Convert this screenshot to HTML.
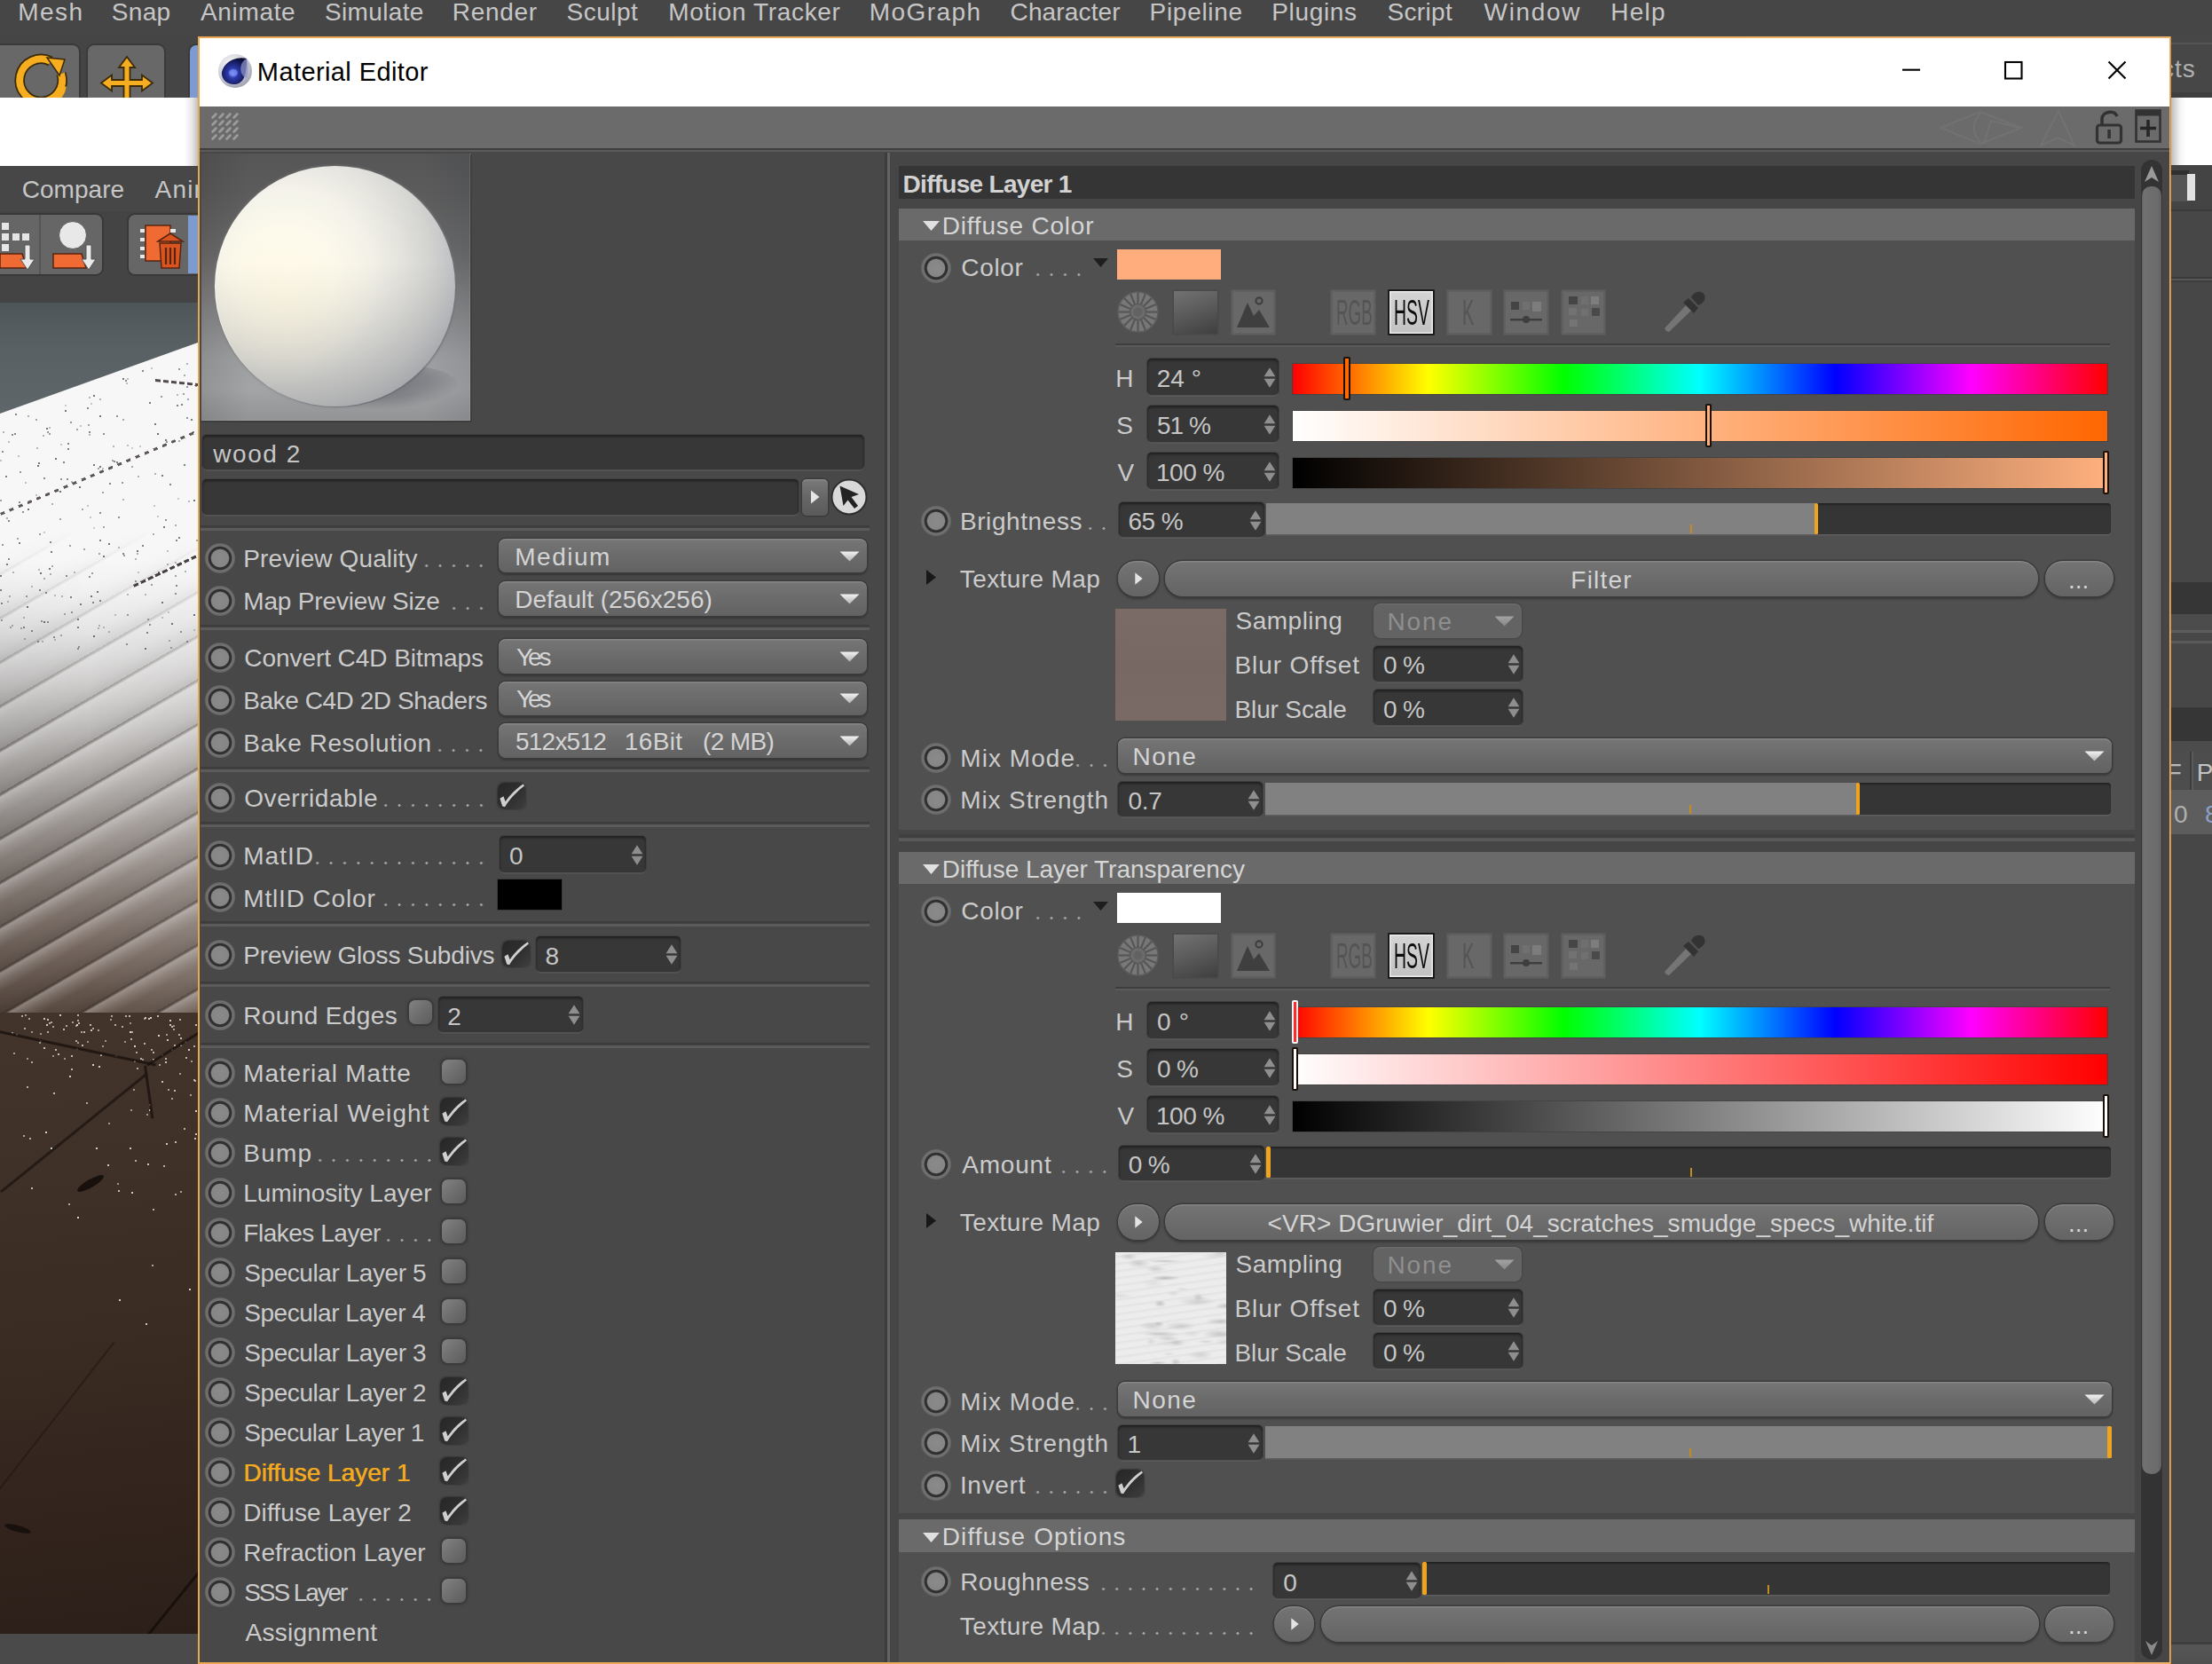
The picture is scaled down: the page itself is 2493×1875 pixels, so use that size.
<!DOCTYPE html>
<html><head><meta charset="utf-8"><title>Material Editor</title>
<style>
html,body{margin:0;padding:0;}
body{width:2493px;height:1875px;overflow:hidden;position:relative;background:#454545;
 font-family:"Liberation Sans",sans-serif;}
div{position:absolute;box-sizing:border-box;}
svg{position:absolute;overflow:visible;}
.t{white-space:nowrap;}
/* animation dot (radio-like circle) */
.dot{width:36px;height:36px;border-radius:50%;
 background:radial-gradient(circle at 50% 50%,#8a8a8a 0,#868686 9.6px,#303030 10.8px,#303030 12.8px,#717171 13.8px,#6c6c6c 16.2px,rgba(105,105,105,0) 17.4px);}
/* dropdown */
.dd{border-radius:8px;background:linear-gradient(#767676,#6c6c6c 45%,#626262);
 box-shadow:0 0 0 1.5px #3b3b3b,0 2px 2px 1px rgba(0,0,0,.25), inset 0 1.5px 0 rgba(255,255,255,.12);}
.dd.dis{background:#636363;box-shadow:0 0 0 1.5px #484848, inset 0 1.5px 0 rgba(255,255,255,.06);}
/* numeric / text field */
.fld{border-radius:5px;background:#373737;
 box-shadow:inset 0 2px 3px rgba(0,0,0,.45),0 1.5px 0 rgba(255,255,255,.10),0 0 0 1px #3f3f3f;}
/* pill button */
.pill{border-radius:22px;background:linear-gradient(#747474,#6c6c6c 50%,#646464);
 box-shadow:0 0 0 1.5px #3a3a3a,0 2px 3px 1px rgba(0,0,0,.3), inset 0 1.5px 0 rgba(255,255,255,.13);}
/* checkboxes */
.cb{border-radius:7px;background:linear-gradient(135deg,#838383,#707070 45%,#5c5c5c);
 box-shadow:0 0 0 2px #3b3b3b,0 0 2px 2.5px rgba(60,60,60,.5);}
.cbk{border-radius:8px;background:linear-gradient(135deg,#262626,#303030 55%,#3e3e3e);
 box-shadow:0 0 1.5px 0.5px rgba(50,50,50,.8),0 1.5px 0 rgba(255,255,255,.08);}
.sep{height:4px;background:linear-gradient(#3d3d3d 0,#3d3d3d 50%,#5a5a5a 50%,#5a5a5a 100%);}
.ibtn{background:#686868;box-shadow:0 0 0 1.5px #5f5f5f, inset 0 0 0 1px #606060;}

</style></head>
<body>
<div style="left:0px;top:0px;width:2493px;height:42px;background:#464646;"></div>
<div class="t" style="left:20.35px;top:0.4px;font-size:28px;line-height:28px;color:#c6c6c6;letter-spacing:1.38px;">Mesh</div>
<div class="t" style="left:125.75px;top:0.4px;font-size:28px;line-height:28px;color:#c6c6c6;letter-spacing:0.33px;">Snap</div>
<div class="t" style="left:226px;top:0.4px;font-size:28px;line-height:28px;color:#c6c6c6;letter-spacing:0.66px;">Animate</div>
<div class="t" style="left:366.05px;top:0.4px;font-size:28px;line-height:28px;color:#c6c6c6;letter-spacing:0.34px;">Simulate</div>
<div class="t" style="left:509.75px;top:0.4px;font-size:28px;line-height:28px;color:#c6c6c6;letter-spacing:0.69px;">Render</div>
<div class="t" style="left:638.45px;top:0.4px;font-size:28px;line-height:28px;color:#c6c6c6;letter-spacing:0.52px;">Sculpt</div>
<div class="t" style="left:753.25px;top:0.4px;font-size:28px;line-height:28px;color:#c6c6c6;letter-spacing:0.65px;">Motion Tracker</div>
<div class="t" style="left:979.75px;top:0.4px;font-size:28px;line-height:28px;color:#c6c6c6;letter-spacing:1.43px;">MoGraph</div>
<div class="t" style="left:1138.55px;top:0.4px;font-size:28px;line-height:28px;color:#c6c6c6;letter-spacing:0.14px;">Character</div>
<div class="t" style="left:1295.55px;top:0.4px;font-size:28px;line-height:28px;color:#c6c6c6;letter-spacing:0.71px;">Pipeline</div>
<div class="t" style="left:1433.15px;top:0.4px;font-size:28px;line-height:28px;color:#c6c6c6;letter-spacing:0.68px;">Plugins</div>
<div class="t" style="left:1563.45px;top:0.4px;font-size:28px;line-height:28px;color:#c6c6c6;letter-spacing:0.33px;">Script</div>
<div class="t" style="left:1672.6px;top:0.4px;font-size:28px;line-height:28px;color:#c6c6c6;letter-spacing:1.68px;">Window</div>
<div class="t" style="left:1815.25px;top:0.4px;font-size:28px;line-height:28px;color:#c6c6c6;letter-spacing:1.22px;">Help</div>
<div style="left:0px;top:42px;width:223px;height:68px;background:#454545;"></div>
<div style="left:-6px;top:51px;width:95px;height:70px;background:#686868;border-radius:7px;box-shadow:0 0 0 2px #3a3a3a;"></div>
<div style="left:99px;top:51px;width:86px;height:70px;background:#686868;border-radius:7px;box-shadow:0 0 0 2px #3a3a3a;"></div>
<div style="left:213.5px;top:51px;width:20px;height:70px;background:#7d9bd0;border-radius:7px 0 0 0;box-shadow:0 0 0 2px #3a3a3a;"></div>
<svg style="left:17px;top:61px" width="62" height="62" viewBox="0 0 62 62"><path d="M40 8 A24 24 0 1 0 52 22" fill="none" stroke="#3a2a08" stroke-width="11.5"/><path d="M40 8 A24 24 0 1 0 52 22" fill="none" stroke="#f6ad1f" stroke-width="8"/><path d="M36 4 L56 6 L50 24 Z" fill="#f6ad1f" stroke="#3a2a08" stroke-width="1.5"/><path d="M22 54 A24 24 0 0 0 54 36" fill="none" stroke="#f6ad1f" stroke-width="8"/></svg>
<svg style="left:112px;top:62px" width="62" height="62" viewBox="0 0 62 62"><path d="M31 2 L40 14 L34.5 14 L34.5 28 L48 28 L48 22.5 L60 31.5 L48 40.5 L48 35 L34.5 35 L34.5 60 L27.5 60 L27.5 35 L14 35 L14 40.5 L2 31.5 L14 22.5 L14 28 L27.5 28 L27.5 14 L22 14 Z" fill="#f6ad1f" stroke="#3a2a08" stroke-width="1.8"/></svg>
<div style="left:0px;top:110px;width:223px;height:77px;background:#ffffff;"></div>
<div style="left:0px;top:187px;width:223px;height:52px;background:#474747;"></div>
<div class="t" style="left:24.75px;top:199.8px;font-size:28px;line-height:28px;color:#c6c6c6;letter-spacing:0.04px;">Compare</div>
<div class="t" style="left:174.5px;top:199.8px;font-size:28px;line-height:28px;color:#c6c6c6;letter-spacing:1.2px;">Anim</div>
<div style="left:0px;top:239px;width:223px;height:102px;background:#444444;"></div>
<div style="left:-6px;top:242px;width:121px;height:67px;background:#666666;border-radius:7px;box-shadow:0 0 0 2px #383838;"></div>
<div style="left:44px;top:242px;width:2px;height:67px;background:#555;"></div>
<div style="left:145px;top:242px;width:90px;height:67px;background:#666666;border-radius:7px;box-shadow:0 0 0 2px #383838;"></div>
<div style="left:212px;top:243px;width:12px;height:65px;background:#7d9bd0;"></div>
<svg style="left:0px;top:248px" width="44" height="60" viewBox="0 0 44 60"><g fill="#e6e6e6"><rect x="2" y="3" width="8" height="8"/><rect x="2" y="15" width="8" height="8"/><rect x="14" y="15" width="8" height="8"/><rect x="25" y="15" width="8" height="8"/><rect x="2" y="27" width="8" height="8"/></g><path d="M0 38 L25 38 L30 54 L0 54 Z" fill="#ef6b33" stroke="#5a2410" stroke-width="1.5"/><path d="M28 28 L34 28 L34 44 L39 44 L31 56 L23 44 L28 44 Z" fill="#e9e9e9" stroke="#555" stroke-width="1"/></svg>
<svg style="left:56px;top:248px" width="56" height="60" viewBox="0 0 56 60"><circle cx="26" cy="17" r="15.5" fill="#e8e8e8" stroke="#5a5a5a" stroke-width="1"/><path d="M4 38 L36 38 L41 54 L4 54 Z" fill="#ef6b33" stroke="#5a2410" stroke-width="1.5"/><path d="M41 28 L47 28 L47 44 L52 44 L44 56 L36 44 L41 44 Z" fill="#e9e9e9" stroke="#555" stroke-width="1"/></svg>
<svg style="left:156px;top:250px" width="56" height="58" viewBox="0 0 56 58"><path d="M8 4 L36 4 L36 44 L8 44 Z" fill="#ef6b33" stroke="#5a2410" stroke-width="1.5"/><g fill="#e8e8e8"><rect x="2" y="8" width="5" height="4"/><rect x="2" y="18" width="5" height="4"/><rect x="2" y="28" width="5" height="4"/><rect x="2" y="37" width="5" height="4"/><rect x="36" y="8" width="6" height="4"/></g><path d="M24 24 L48 24 L46 52 L26 52 Z" fill="#d9551f" stroke="#5a2410" stroke-width="1.5"/><path d="M22 22 L36 13 L50 22 Z" fill="#d9551f" stroke="#5a2410" stroke-width="1.5"/><g stroke="#5a2410" stroke-width="2.2"><line x1="31" y1="29" x2="31" y2="48"/><line x1="36" y1="29" x2="36" y2="48"/><line x1="41" y1="29" x2="41" y2="48"/></g></svg>
<div style="left:0px;top:341px;width:223px;height:1499.6px;background:linear-gradient(#4f5659 0,#596064 50px,#60686c 140px);overflow:hidden;"><div style="left:0;top:0;width:223px;height:1506px;clip-path:polygon(0 125px,223px 45px,223px 1506px,0 1506px);background:linear-gradient(#f7f7f7 0,#f7f7f7 290px,#f0f0f0 330px,#e6e6e6 365px,#c8c6c5 459px,#a8a3a0 559px,#8a7f79 659px,#6e5f56 759px,#5e4e44 800px);"></div><div style="left:0;top:290px;width:223px;height:510px;-webkit-mask-image:linear-gradient(rgba(0,0,0,0) 0,#000 160px);mask-image:linear-gradient(rgba(0,0,0,0) 0,#000 160px);background:linear-gradient(90deg,rgba(0,0,0,.10) 0,rgba(0,0,0,0) 45%,rgba(255,255,255,.14) 100%);"></div><div style="left:0;top:255px;width:223px;height:545px;-webkit-mask-image:linear-gradient(rgba(0,0,0,0) 0,rgba(0,0,0,.5) 120px,#000 260px);mask-image:linear-gradient(rgba(0,0,0,0) 0,rgba(0,0,0,.5) 120px,#000 260px);background:repeating-linear-gradient(150deg,rgba(35,25,20,.42) 0,rgba(35,25,20,.25) 2px,rgba(255,255,255,.30) 4px,rgba(255,255,255,.14) 12px,rgba(255,255,255,0) 22px,rgba(0,0,0,.04) 32px,rgba(0,0,0,.12) 43px);"></div><div style="left:0;top:0;width:2px;height:2px;box-shadow:198px 267px 0 0 rgba(60,66,80,0.62),181px 105px 0 0 rgba(60,66,80,0.51),112px 335px 0 0 rgba(60,66,80,0.65),184px 252px 0 0 rgba(60,66,80,0.70),152px 288px 0 0 rgba(60,66,80,0.36),186px 244px 0 0 rgba(60,66,80,0.56),139px 284px 0 0 rgba(60,66,80,0.49),0px 323px 0 0 rgba(60,66,80,0.62),112px 236px 0 0 rgba(60,66,80,0.58),14px 303px 0 0 rgba(60,66,80,0.38),16px 147px 0 0 rgba(60,66,80,0.61),45px 304px 0 0 rgba(60,66,80,0.74),110px 186px 0 0 rgba(60,66,80,0.49),152px 313px 0 0 rgba(60,66,80,0.56),143px 85px 0 0 rgba(60,66,80,0.32),56px 305px 0 0 rgba(60,66,80,0.40),13px 148px 0 0 rgba(60,66,80,0.59),154px 282px 0 0 rgba(60,66,80,0.40),115px 213px 0 0 rgba(60,66,80,0.48),26px 354px 0 0 rgba(60,66,80,0.35),218px 368px 0 0 rgba(60,66,80,0.26),102px 330px 0 0 rgba(60,66,80,0.73),100px 148px 0 0 rgba(60,66,80,0.35),210px 129px 0 0 rgba(60,66,80,0.54),31px 232px 0 0 rgba(60,66,80,0.73),29px 330px 0 0 rgba(60,66,80,0.50),197px 292px 0 0 rgba(60,66,80,0.37),200px 220px 0 0 rgba(60,66,80,0.26),0px 222px 0 0 rgba(60,66,80,0.48),76px 164px 0 0 rgba(60,66,80,0.67),0px 307px 0 0 rgba(60,66,80,0.67),26px 365px 0 0 rgba(60,66,80,0.61),201px 155px 0 0 rgba(60,66,80,0.44),87px 389px 0 0 rgba(60,66,80,0.54),80px 201px 0 0 rgba(60,66,80,0.39),186px 154px 0 0 rgba(60,66,80,0.72),55px 147px 0 0 rgba(60,66,80,0.51),42px 183px 0 0 rgba(60,66,80,0.73),197px 327px 0 0 rgba(60,66,80,0.57),203px 370px 0 0 rgba(60,66,80,0.52),160px 76px 0 0 rgba(60,66,80,0.62),100px 308px 0 0 rgba(60,66,80,0.57),206px 102px 0 0 rgba(60,66,80,0.49),76px 158px 0 0 rgba(60,66,80,0.62),217px 145px 0 0 rgba(60,66,80,0.58),67px 243px 0 0 rgba(60,66,80,0.45),46px 358px 0 0 rgba(60,66,80,0.50),49px 359px 0 0 rgba(60,66,80,0.75),100px 106px 0 0 rgba(60,66,80,0.35),20px 172px 0 0 rgba(60,66,80,0.30),53px 145px 0 0 rgba(60,66,80,0.53),197px 307px 0 0 rgba(60,66,80,0.46),92px 232px 0 0 rgba(60,66,80,0.44),61px 379px 0 0 rgba(60,66,80,0.31),112px 267px 0 0 rgba(60,66,80,0.68),48px 149px 0 0 rgba(60,66,80,0.37),89px 207px 0 0 rgba(60,66,80,0.73),189px 348px 0 0 rgba(60,66,80,0.26),7px 294px 0 0 rgba(60,66,80,0.70),105px 253px 0 0 rgba(60,66,80,0.25),87px 365px 0 0 rgba(60,66,80,0.66),190px 380px 0 0 rgba(60,66,80,0.37),116px 285px 0 0 rgba(60,66,80,0.72),160px 273px 0 0 rgba(60,66,80,0.63),101px 241px 0 0 rgba(60,66,80,0.27),174px 136px 0 0 rgba(60,66,80,0.71),143px 160px 0 0 rgba(60,66,80,0.31),56px 269px 0 0 rgba(60,66,80,0.60),116px 252px 0 0 rgba(60,66,80,0.44),49px 258px 0 0 rgba(60,66,80,0.26),67px 212px 0 0 rgba(60,66,80,0.73),143px 351px 0 0 rgba(60,66,80,0.49),52px 141px 0 0 rgba(60,66,80,0.73),157px 161px 0 0 rgba(60,66,80,0.26),111px 282px 0 0 rgba(60,66,80,0.46),57px 280px 0 0 rgba(60,66,80,0.71),75px 198px 0 0 rgba(60,66,80,0.59),44px 323px 0 0 rgba(60,66,80,0.62),112px 127px 0 0 rgba(60,66,80,0.73),69px 330px 0 0 rgba(60,66,80,0.37),49px 310px 0 0 rgba(60,66,80,0.40),212px 223px 0 0 rgba(60,66,80,0.34),49px 197px 0 0 rgba(60,66,80,0.58),211px 108px 0 0 rgba(60,66,80,0.45),47px 381px 0 0 rgba(60,66,80,0.32),87px 356px 0 0 rgba(60,66,80,0.69),163px 389px 0 0 rgba(60,66,80,0.72),73px 121px 0 0 rgba(60,66,80,0.72),148px 184px 0 0 rgba(60,66,80,0.44),73px 115px 0 0 rgba(60,66,80,0.25),62px 175px 0 0 rgba(60,66,80,0.73),27px 378px 0 0 rgba(60,66,80,0.35),79px 331px 0 0 rgba(60,66,80,0.66),105px 182px 0 0 rgba(60,66,80,0.71),43px 180px 0 0 rgba(60,66,80,0.70),6px 195px 0 0 rgba(60,66,80,0.66),170px 73px 0 0 rgba(60,66,80,0.27),13px 363px 0 0 rgba(60,66,80,0.38),166px 356px 0 0 rgba(60,66,80,0.42),60px 376px 0 0 rgba(60,66,80,0.56),58px 296px 0 0 rgba(60,66,80,0.41),168px 362px 0 0 rgba(60,66,80,0.57),210px 68px 0 0 rgba(60,66,80,0.37),105px 375px 0 0 rgba(60,66,80,0.73),86px 142px 0 0 rgba(60,66,80,0.46),110px 366px 0 0 rgba(60,66,80,0.34),178px 303px 0 0 rgba(60,66,80,0.66),172px 260px 0 0 rgba(60,66,80,0.41),71px 179px 0 0 rgba(60,66,80,0.64),17px 125px 0 0 rgba(60,66,80,0.63),7px 242px 0 0 rgba(60,66,80,0.41),218px 351px 0 0 rgba(60,66,80,0.74),21px 224px 0 0 rgba(60,66,80,0.60),99px 137px 0 0 rgba(60,66,80,0.46),138px 282px 0 0 rgba(60,66,80,0.62),188px 279px 0 0 rgba(60,66,80,0.31),187px 156px 0 0 rgba(60,66,80,0.53),83px 303px 0 0 rgba(60,66,80,0.35),55px 140px 0 0 rgba(60,66,80,0.33),197px 250px 0 0 rgba(60,66,80,0.41),88px 387px 0 0 rgba(60,66,80,0.50),51px 326px 0 0 rgba(60,66,80,0.58),220px 93px 0 0 rgba(60,66,80,0.49),182px 337px 0 0 rgba(60,66,80,0.71),9px 156px 0 0 rgba(60,66,80,0.31),42px 381px 0 0 rgba(60,66,80,0.54),207px 182px 0 0 rgba(60,66,80,0.68),100px 145px 0 0 rgba(60,66,80,0.64),210px 94px 0 0 rgba(60,66,80,0.55),138px 131px 0 0 rgba(60,66,80,0.43),31px 127px 0 0 rgba(60,66,80,0.38),133px 275px 0 0 rgba(60,66,80,0.35),2px 167px 0 0 rgba(60,66,80,0.59),41px 163px 0 0 rgba(60,66,80,0.35),177px 240px 0 0 rgba(60,66,80,0.28),22px 190px 0 0 rgba(60,66,80,0.53),142px 90px 0 0 rgba(60,66,80,0.33),155px 195px 0 0 rgba(60,66,80,0.39),68px 374px 0 0 rgba(60,66,80,0.41),126px 177px 0 0 rgba(60,66,80,0.46),192px 388px 0 0 rgba(60,66,80,0.43),43px 300px 0 0 rgba(60,66,80,0.35),1px 357px 0 0 rgba(60,66,80,0.46),182px 194px 0 0 rgba(60,66,80,0.69),102px 113px 0 0 rgba(60,66,80,0.26),122px 271px 0 0 rgba(60,66,80,0.70),19px 265px 0 0 rgba(60,66,80,0.44),112px 108px 0 0 rgba(60,66,80,0.39),116px 365px 0 0 rgba(60,66,80,0.30),109px 325px 0 0 rgba(60,66,80,0.73),210px 381px 0 0 rgba(60,66,80,0.49),11px 365px 0 0 rgba(60,66,80,0.44),201px 264px 0 0 rgba(60,66,80,0.66),35px 319px 0 0 rgba(60,66,80,0.36),90px 339px 0 0 rgba(60,66,80,0.66),40px 131px 0 0 rgba(60,66,80,0.45),115px 186px 0 0 rgba(60,66,80,0.31),55px 299px 0 0 rgba(60,66,80,0.70),9px 245px 0 0 rgba(60,66,80,0.63),8px 336px 0 0 rgba(60,66,80,0.31),133px 241px 0 0 rgba(60,66,80,0.56),68px 198px 0 0 rgba(60,66,80,0.54),94px 277px 0 0 rgba(60,66,80,0.47),138px 221px 0 0 rgba(60,66,80,0.37),170px 317px 0 0 rgba(60,66,80,0.48),40px 216px 0 0 rgba(60,66,80,0.30),28px 202px 0 0 rgba(60,66,80,0.30),98px 228px 0 0 rgba(60,66,80,0.27),141px 87px 0 0 rgba(60,66,80,0.62),173px 228px 0 0 rgba(60,66,80,0.28),112px 184px 0 0 rgba(60,66,80,0.73),30px 342px 0 0 rgba(60,66,80,0.75),163px 328px 0 0 rgba(60,66,80,0.35),218px 222px 0 0 rgba(60,66,80,0.73),204px 114px 0 0 rgba(60,66,80,0.64),207px 81px 0 0 rgba(60,66,80,0.43),168px 112px 0 0 rgba(60,66,80,0.70),61px 329px 0 0 rgba(60,66,80,0.32),111px 363px 0 0 rgba(60,66,80,0.35),58px 226px 0 0 rgba(60,66,80,0.41),35px 369px 0 0 rgba(60,66,80,0.59),199px 115px 0 0 rgba(60,66,80,0.64),25px 235px 0 0 rgba(60,66,80,0.57),80px 348px 0 0 rgba(60,66,80,0.53),129px 351px 0 0 rgba(60,66,80,0.30),221px 267px 0 0 rgba(60,66,80,0.45),177px 147px 0 0 rgba(60,66,80,0.75),128px 178px 0 0 rgba(60,66,80,0.63),98px 118px 0 0 rgba(60,66,80,0.62),10px 330px 0 0 rgba(60,66,80,0.38),142px 384px 0 0 rgba(60,66,80,0.54),148px 163px 0 0 rgba(60,66,80,0.25),137px 202px 0 0 rgba(60,66,80,0.51),199px 103px 0 0 rgba(60,66,80,0.36),0px 177px 0 0 rgba(60,66,80,0.30),79px 134px 0 0 rgba(60,66,80,0.54),131px 127px 0 0 rgba(60,66,80,0.56),105px 104px 0 0 rgba(60,66,80,0.72),21px 270px 0 0 rgba(60,66,80,0.69),174px 192px 0 0 rgba(60,66,80,0.38),2px 272px 0 0 rgba(60,66,80,0.53),78px 273px 0 0 rgba(60,66,80,0.47),208px 302px 0 0 rgba(60,66,80,0.37),201px 74px 0 0 rgba(60,66,80,0.52),90px 138px 0 0 rgba(60,66,80,0.28),122px 370px 0 0 rgba(60,66,80,0.32),44px 260px 0 0 rgba(60,66,80,0.50),143px 328px 0 0 rgba(60,66,80,0.34),68px 159px 0 0 rgba(60,66,80,0.27),198px 318px 0 0 rgba(60,66,80,0.61),1px 338px 0 0 rgba(60,66,80,0.62),103px 304px 0 0 rgba(60,66,80,0.48),74px 307px 0 0 rgba(60,66,80,0.60),188px 294px 0 0 rgba(60,66,80,0.38),123px 203px 0 0 rgba(60,66,80,0.64),116px 147px 0 0 rgba(60,66,80,0.57),215px 131px 0 0 rgba(60,66,80,0.69),3px 145px 0 0 rgba(60,66,80,0.37),165px 371px 0 0 rgba(60,66,80,0.62),72px 350px 0 0 rgba(60,66,80,0.41),53px 359px 0 0 rgba(60,66,80,0.57),154px 279px 0 0 rgba(60,66,80,0.74),104px 337px 0 0 rgba(60,66,80,0.60),191px 204px 0 0 rgba(60,66,80,0.61),127px 161px 0 0 rgba(60,66,80,0.36),138px 85px 0 0 rgba(60,66,80,0.71),23px 366px 0 0 rgba(60,66,80,0.42),9px 288px 0 0 rgba(60,66,80,0.57),155px 303px 0 0 rgba(60,66,80,0.28),131px 179px 0 0 rgba(60,66,80,0.66),182px 354px 0 0 rgba(60,66,80,0.28),193px 361px 0 0 rgba(60,66,80,0.72);"></div><div style="left:0px;top:237px;width:245px;height:3px;transform:rotate(-22.8deg);transform-origin:0 0;background:repeating-linear-gradient(90deg,#2a2020 0,#2a2020 5px,rgba(0,0,0,0) 5px,rgba(0,0,0,0) 11px);opacity:.75;"></div><div style="left:150px;top:318px;width:90px;height:3px;transform:rotate(-25.4deg);transform-origin:0 0;background:repeating-linear-gradient(90deg,#2a2020 0,#2a2020 6px,rgba(0,0,0,0) 6px,rgba(0,0,0,0) 9px);opacity:.85;"></div><div style="left:175px;top:86px;width:50px;height:3px;transform:rotate(6deg);transform-origin:0 0;background:repeating-linear-gradient(90deg,#2a2020 0,#2a2020 6px,rgba(0,0,0,0) 6px,rgba(0,0,0,0) 9px);opacity:.8;"></div><div style="left:0;top:800px;width:223px;height:706px;overflow:hidden;background:linear-gradient(174deg,#43342b 0,#3f3028 25%,#382921 58%,#2c1f19 100%);"><div style="left:0;top:2px;width:2px;height:2px;box-shadow:101px 11px 0 0 rgba(225,220,215,0.81),35px 53px 0 0 rgba(225,220,215,0.70),30px 49px 0 0 rgba(225,220,215,0.56),124px 5px 0 0 rgba(225,220,215,0.59),122px 122px 0 0 rgba(225,220,215,0.60),78px 69px 0 0 rgba(225,220,215,0.93),151px 35px 0 0 rgba(225,220,215,0.94),26px 136px 0 0 rgba(225,220,215,0.67),57px 8px 0 0 rgba(225,220,215,0.67),193px 13px 0 0 rgba(225,220,215,0.78),162px 32px 0 0 rgba(225,220,215,0.77),32px 4px 0 0 rgba(225,220,215,0.63),170px 39px 0 0 rgba(225,220,215,0.68),153px 42px 0 0 rgba(225,220,215,0.67),189px 84px 0 0 rgba(225,220,215,0.65),151px 52px 0 0 rgba(225,220,215,0.90),178px 23px 0 0 rgba(225,220,215,0.94),49px 37px 0 0 rgba(225,220,215,0.85),59px 46px 0 0 rgba(225,220,215,0.57),168px 101px 0 0 rgba(225,220,215,0.78),203px 26px 0 0 rgba(225,220,215,0.83),154px 60px 0 0 rgba(225,220,215,0.73),197px 202px 0 0 rgba(225,220,215,0.74),167px 4px 0 0 rgba(225,220,215,0.83),164px 348px 0 0 rgba(225,220,215,0.88),92px 34px 0 0 rgba(225,220,215,0.82),15px 43px 0 0 rgba(225,220,215,0.62),49px 4px 0 0 rgba(225,220,215,0.86),53px 19px 0 0 rgba(225,220,215,0.71),202px 5px 0 0 rgba(225,220,215,0.73),146px 150px 0 0 rgba(225,220,215,0.88),201px 22px 0 0 rgba(225,220,215,0.72),108px 150px 0 0 rgba(225,220,215,0.93),59px 13px 0 0 rgba(225,220,215,0.64),80px 46px 0 0 rgba(225,220,215,0.79),87px 0px 0 0 rgba(225,220,215,0.72),111px 58px 0 0 rgba(225,220,215,0.93),172px 50px 0 0 rgba(225,220,215,0.80),169px 3px 0 0 rgba(225,220,215,0.91),187px 145px 0 0 rgba(225,220,215,0.87),115px 35px 0 0 rgba(225,220,215,0.59),162px 4px 0 0 rgba(225,220,215,0.58),74px 12px 0 0 rgba(225,220,215,0.69),28px 0px 0 0 rgba(225,220,215,0.61),44px 31px 0 0 rgba(225,220,215,0.56),202px 66px 0 0 rgba(225,220,215,0.61),85px 29px 0 0 rgba(225,220,215,0.70),51px 132px 0 0 rgba(225,220,215,0.95),130px 46px 0 0 rgba(225,220,215,0.58),45px 29px 0 0 rgba(225,220,215,0.66),195px 12px 0 0 rgba(225,220,215,0.56),215px 52px 0 0 rgba(225,220,215,0.61),145px 1px 0 0 rgba(225,220,215,0.76),219px 139px 0 0 rgba(225,220,215,0.83),87px 31px 0 0 rgba(225,220,215,0.62),186px 53px 0 0 rgba(225,220,215,0.86),102px 17px 0 0 rgba(225,220,215,0.87),220px 134px 0 0 rgba(225,220,215,0.87),193px 94px 0 0 rgba(225,220,215,0.64),140px 30px 0 0 rgba(225,220,215,0.56),18px 22px 0 0 rgba(225,220,215,0.65),172px 219px 0 0 rgba(225,220,215,0.73),213px 309px 0 0 rgba(225,220,215,0.93),110px 17px 0 0 rgba(225,220,215,0.64),71px 16px 0 0 rgba(225,220,215,0.80),207px 128px 0 0 rgba(225,220,215,0.74),165px 112px 0 0 rgba(225,220,215,0.58),166px 168px 0 0 rgba(225,220,215,0.86),182px 45px 0 0 rgba(225,220,215,0.62),188px 28px 0 0 rgba(225,220,215,0.87),218px 35px 0 0 rgba(225,220,215,0.71),214px 90px 0 0 rgba(225,220,215,0.62),52px 11px 0 0 rgba(225,220,215,0.91),191px 11px 0 0 rgba(225,220,215,0.88),219px 74px 0 0 rgba(225,220,215,0.69),146px 9px 0 0 rgba(225,220,215,0.56),218px 73px 0 0 rgba(225,220,215,0.76),212px 39px 0 0 rgba(225,220,215,0.90),195px 16px 0 0 rgba(225,220,215,0.65),94px 19px 0 0 rgba(225,220,215,0.78),86px 38px 0 0 rgba(225,220,215,0.60),208px 30px 0 0 rgba(225,220,215,0.73),152px 164px 0 0 rgba(225,220,215,0.72),209px 48px 0 0 rgba(225,220,215,0.76),141px 1px 0 0 rgba(225,220,215,0.73),67px 0px 0 0 rgba(225,220,215,0.87),65px 44px 0 0 rgba(225,220,215,0.84),147px 27px 0 0 rgba(225,220,215,0.76),147px 107px 0 0 rgba(225,220,215,0.59),148px 19px 0 0 rgba(225,220,215,0.66),186px 49px 0 0 rgba(225,220,215,0.77),184px 170px 0 0 rgba(225,220,215,0.73),158px 49px 0 0 rgba(225,220,215,0.75),172px 42px 0 0 rgba(225,220,215,0.76),133px 198px 0 0 rgba(225,220,215,0.83),203px 199px 0 0 rgba(225,220,215,0.65),148px 200px 0 0 rgba(225,220,215,0.89),55px 9px 0 0 rgba(225,220,215,0.73),35px 19px 0 0 rgba(225,220,215,0.58),168px 107px 0 0 rgba(225,220,215,0.91),60px 88px 0 0 rgba(225,220,215,0.81),57px 150px 0 0 rgba(225,220,215,0.94),77px 213px 0 0 rgba(225,220,215,0.71),134px 321px 0 0 rgba(225,220,215,0.88),62px 39px 0 0 rgba(225,220,215,0.76),104px 15px 0 0 rgba(225,220,215,0.68),177px 1px 0 0 rgba(225,220,215,0.77),125px 1px 0 0 rgba(225,220,215,0.68),160px 50px 0 0 rgba(225,220,215,0.58),220px 108px 0 0 rgba(225,220,215,0.94),45px 21px 0 0 rgba(225,220,215,0.57),187px 22px 0 0 rgba(225,220,215,0.60),121px 169px 0 0 rgba(225,220,215,0.88),86px 11px 0 0 rgba(225,220,215,0.92),150px 84px 0 0 rgba(225,220,215,0.59),30px 81px 0 0 rgba(225,220,215,0.72),35px 195px 0 0 rgba(225,220,215,0.80),191px 6px 0 0 rgba(225,220,215,0.89),33px 139px 0 0 rgba(225,220,215,0.73),104px 56px 0 0 rgba(225,220,215,0.92),88px 9px 0 0 rgba(225,220,215,0.76),81px 8px 0 0 rgba(225,220,215,0.61),27px 15px 0 0 rgba(225,220,215,0.67),97px 99px 0 0 rgba(225,220,215,0.67),137px 13px 0 0 rgba(225,220,215,0.69),13px 20px 0 0 rgba(225,220,215,0.56),179px 56px 0 0 rgba(225,220,215,0.63),132px 190px 0 0 rgba(225,220,215,0.59),193px 39px 0 0 rgba(225,220,215,0.75),196px 34px 0 0 rgba(225,220,215,0.75),171px 282px 0 0 rgba(225,220,215,0.69),196px 85px 0 0 rgba(225,220,215,0.80),118px 29px 0 0 rgba(225,220,215,0.57),53px 5px 0 0 rgba(225,220,215,0.85),85px 12px 0 0 rgba(225,220,215,0.58),197px 143px 0 0 rgba(225,220,215,0.82),91px 19px 0 0 rgba(225,220,215,0.67),129px 11px 0 0 rgba(225,220,215,0.73),87px 228px 0 0 rgba(225,220,215,0.94),146px 19px 0 0 rgba(225,220,215,0.94),98px 30px 0 0 rgba(225,220,215,0.55),113px 45px 0 0 rgba(225,220,215,0.75),72px 49px 0 0 rgba(225,220,215,0.55),87px 6px 0 0 rgba(225,220,215,0.71),24px 1px 0 0 rgba(225,220,215,0.67),80px 61px 0 0 rgba(225,220,215,0.76),182px 75px 0 0 rgba(225,220,215,0.84),203px 34px 0 0 rgba(225,220,215,0.68),220px 11px 0 0 rgba(225,220,215,0.84),163px 3px 0 0 rgba(225,220,215,0.88);"></div><div style="left:-10px;top:18px;width:190px;height:3px;background:#1a120e;transform:rotate(12deg);transform-origin:0 0;opacity:.8"></div><div style="left:165px;top:58px;width:70px;height:3px;background:#1a120e;transform:rotate(-32deg);transform-origin:0 0;opacity:.8"></div><div style="left:162px;top:60px;width:3px;height:60px;background:#1a120e;transform:rotate(-8deg);transform-origin:0 0;opacity:.8"></div><div style="left:0px;top:201px;width:210px;height:2.5px;background:#1c1410;transform:rotate(-39deg);transform-origin:0 0;opacity:.75"></div><div style="left:166px;top:700px;width:90px;height:2.5px;background:#150e0a;transform:rotate(-51deg);transform-origin:0 0;opacity:.85"></div><div style="left:-20px;top:560px;width:240px;height:2px;background:#1c1410;transform:rotate(-52deg);transform-origin:0 0;opacity:.5"></div><div style="left:85px;top:188px;width:34px;height:9px;background:#18100c;border-radius:50%;transform:rotate(-30deg);"></div><div style="left:5px;top:578px;width:30px;height:7px;background:#18100c;border-radius:50%;transform:rotate(15deg);"></div></div></div>
<div style="left:0px;top:1840.6px;width:223px;height:35px;background:#4a4a4a;"></div>
<div style="left:2447px;top:42px;width:46px;height:1833px;background:#474747;"></div>
<div style="left:2447px;top:48px;width:46px;height:2px;background:#555;"></div>
<div class="t" style="left:2436px;top:64px;font-size:28px;line-height:28px;color:#b0b0b0;letter-spacing:1px;">cts</div>
<div style="left:2447px;top:104px;width:46px;height:6px;background:#3e3e3e;"></div>
<div style="left:2447px;top:110px;width:46px;height:76px;background:linear-gradient(90deg,#bdbdbd 0,#f4f4f4 10px,#ffffff 16px);"></div>
<div style="left:2447px;top:186px;width:46px;height:52px;background:#444;"></div>
<div style="left:2447px;top:192px;width:20px;height:35px;background:linear-gradient(#2f2f2f 0,#2f2f2f 5px,#555 5px);"></div>
<div style="left:2465px;top:196px;width:9px;height:30px;background:#e2e2e2;"></div>
<div style="left:2447px;top:236px;width:46px;height:2px;background:#3a3a3a;"></div>
<div style="left:2447px;top:312px;width:46px;height:6px;background:linear-gradient(#3a3a3a 0,#3a3a3a 2px,#575757 2px,#575757 4px,#3e3e3e 4px);"></div>
<div style="left:2447px;top:656px;width:46px;height:36px;background:#363636;"></div>
<div style="left:2447px;top:692px;width:46px;height:18px;background:#4c4c4c;"></div>
<div style="left:2447px;top:710px;width:46px;height:3px;background:#5c5c5c;"></div>
<div style="left:2447px;top:722px;width:46px;height:3px;background:#5a5a5a;"></div>
<div style="left:2447px;top:797px;width:46px;height:38px;background:#363636;"></div>
<div style="left:2447px;top:835px;width:46px;height:12px;background:#4c4c4c;"></div>
<div style="left:2447px;top:847px;width:46px;height:43px;background:#4d4d4d;"></div>
<div style="left:2468px;top:847px;width:4px;height:43px;background:linear-gradient(90deg,#3c3c3c 0,#3c3c3c 50%,#5a5a5a 50%);"></div>
<div class="t" style="left:2441.75px;top:857px;font-size:28px;line-height:28px;color:#b8b8b8;">F</div>
<div class="t" style="left:2475.75px;top:857px;font-size:28px;line-height:28px;color:#c4c4c4;">P</div>
<div style="left:2447px;top:890px;width:46px;height:50px;background:#5d5d5d;"></div>
<div class="t" style="left:2450px;top:903.6px;font-size:28px;line-height:28px;color:#b0b0b0;">0</div>
<div class="t" style="left:2485px;top:903.6px;font-size:28px;line-height:28px;color:#8ca0c8;">8</div>
<div style="left:2447px;top:1850px;width:46px;height:25px;background:linear-gradient(#3e3e3e 0,#3e3e3e 3px,#565656 3px,#505050 100%);"></div>
<div style="left:222.8px;top:40.8px;width:2224.7px;height:1836px;background:linear-gradient(90deg,#e9a850 0,#ebb06a 2222.7px,#c98a3a 2223.6px,#7a4c14 2224.7px);"></div>
<div style="left:208px;top:110px;width:15px;height:77px;background:linear-gradient(90deg,rgba(255,255,255,0),rgba(150,150,150,.22) 55%,rgba(130,130,130,.5));"></div>
<div style="left:225.2px;top:43.1px;width:2219.6px;height:77.4px;background:#ffffff;"></div>
<div class="t" style="left:289.85px;top:67.3px;font-size:29px;line-height:29px;color:#000000;letter-spacing:0.4px;">Material Editor</div>
<svg style="left:245px;top:60px" width="40" height="40" viewBox="0 0 40 40"><defs><radialGradient id="lg1" cx="38%" cy="32%" r="80%"><stop offset="0" stop-color="#fbfbfc"/><stop offset=".5" stop-color="#d4d5dc"/><stop offset="1" stop-color="#8f91a3"/></radialGradient><radialGradient id="lg2" cx="45%" cy="58%" r="60%"><stop offset="0" stop-color="#6f86ee"/><stop offset=".35" stop-color="#2b38a8"/><stop offset="1" stop-color="#0a0c34"/></radialGradient></defs><circle cx="20" cy="20" r="19" fill="url(#lg1)"/><path d="M33 6 C22 3 8 9 5 21 C4 29 11 36 20 35 C29 34 33 26 33 6 Z" fill="url(#lg2)"/><path d="M33 6 C27 9 25 16 27 22 C28 25 30 27 33 28 C35 21 35 13 33 6 Z" fill="#8d93c9" opacity=".75"/><ellipse cx="18" cy="22" rx="5" ry="4" fill="#8aa0ff" opacity=".55"/></svg>
<svg style="left:2140px;top:60px" width="270" height="40" viewBox="0 0 270 40"><g stroke="#000" stroke-width="2.1" fill="none"><line x1="4" y1="18.7" x2="24" y2="18.7"/><rect x="120" y="10" width="18.5" height="18.5"/><line x1="236.5" y1="9.5" x2="255.5" y2="28.5"/><line x1="255.5" y1="9.5" x2="236.5" y2="28.5"/></g></svg>
<div style="left:225.2px;top:119.5px;width:2219.6px;height:47.5px;background:#6b6b6b;"></div>
<div style="left:225.2px;top:167px;width:2219.6px;height:5px;background:linear-gradient(#3e3e3e 0,#3e3e3e 45%,#5a5a5a 45%,#5a5a5a 70%,#484848 70%);"></div>
<svg style="left:237px;top:126px" width="34" height="34" viewBox="0 0 34 34"><g stroke="#9c9c9c" stroke-width="2.6" stroke-linecap="round"><line x1="2.5" y1="6.5" x2="6.5" y2="2.5"/><line x1="2.5" y1="14.5" x2="6.5" y2="10.5"/><line x1="2.5" y1="22.5" x2="6.5" y2="18.5"/><line x1="2.5" y1="30.5" x2="6.5" y2="26.5"/><line x1="10.5" y1="6.5" x2="14.5" y2="2.5"/><line x1="10.5" y1="14.5" x2="14.5" y2="10.5"/><line x1="10.5" y1="22.5" x2="14.5" y2="18.5"/><line x1="10.5" y1="30.5" x2="14.5" y2="26.5"/><line x1="18.5" y1="6.5" x2="22.5" y2="2.5"/><line x1="18.5" y1="14.5" x2="22.5" y2="10.5"/><line x1="18.5" y1="22.5" x2="22.5" y2="18.5"/><line x1="18.5" y1="30.5" x2="22.5" y2="26.5"/><line x1="26.5" y1="6.5" x2="30.5" y2="2.5"/><line x1="26.5" y1="14.5" x2="30.5" y2="10.5"/><line x1="26.5" y1="22.5" x2="30.5" y2="18.5"/><line x1="26.5" y1="30.5" x2="30.5" y2="26.5"/></g></svg>
<svg style="left:2184px;top:122px" width="160" height="46" viewBox="0 0 160 46" opacity=".5"><g fill="none" stroke="#7a7a7a" stroke-width="2"><path d="M3 22 L48 4 L94 22 L48 40 Z"/><path d="M48 6 C38 16 38 28 48 38"/><path d="M52 40 L60 14 L92 22"/><path d="M116 42 L136 3 L154 42 L135 33 Z"/></g></svg>
<svg style="left:2361px;top:122px" width="34" height="42" viewBox="0 0 34 42"><path d="M8 19 L8 12 C8 4 22 1 25 9" fill="none" stroke="#323232" stroke-width="3.6"/><rect x="2.5" y="19" width="27" height="20" rx="3" fill="#6b6b6b" stroke="#323232" stroke-width="3.2"/><rect x="14.3" y="24" width="3.6" height="10" fill="#323232"/></svg>
<svg style="left:2406px;top:123px" width="32" height="40" viewBox="0 0 32 40"><rect x="1.5" y="1.5" width="27" height="35" fill="#6b6b6b" stroke="#323232" stroke-width="2.6"/><rect x="1" y="1" width="28" height="6.5" fill="#323232"/><path d="M15 12 L15 31 M6 21.5 L24 21.5" stroke="#262626" stroke-width="3.6"/></svg>
<div style="left:225.2px;top:172px;width:772.8px;height:1700.9px;background:#484848;"></div>
<div style="left:997px;top:172px;width:7px;height:1700.5px;background:linear-gradient(90deg,#3d3d3d 0,#3b3b3b 2.8px,#626262 3.2px,#646464 5.6px,#454545 6px);"></div>
<div style="left:1004px;top:172px;width:1440.8px;height:1700.9px;background:#464646;"></div>
<div style="left:1012.5px;top:270px;width:1393.2px;height:664.5px;background:#505050;"></div>
<div style="left:1012.5px;top:996px;width:1393.2px;height:708.5px;background:#505050;"></div>
<div style="left:1012.5px;top:1748px;width:1393.2px;height:124.5px;background:#505050;"></div>
<div style="left:226.5px;top:173px;width:304px;height:301.5px;overflow:hidden;background:linear-gradient(#565656 0,#5c5c5c 15%,#6c6c6c 38%,#878788 58%,#9e9fa1 76%,#a3a4a6 88%,#929395 100%);box-shadow:inset -2px -2px 0 rgba(255,255,255,.12);"><div style="left:0;top:0;width:304px;height:302px;background:linear-gradient(90deg,rgba(0,0,0,.10) 0,rgba(0,0,0,0) 18%,rgba(0,0,0,0) 82%,rgba(20,30,50,.10) 100%);"></div><div style="left:120px;top:236px;width:170px;height:52px;border-radius:50%;background:radial-gradient(ellipse at 45% 40%,rgba(70,74,84,.6) 0,rgba(70,74,84,.32) 45%,rgba(70,74,84,0) 72%);"></div><div style="left:15.5px;top:14px;width:271px;height:271px;border-radius:50%;background:radial-gradient(circle at 30% 45%,#fffef6 0,#fdfbf0 22%,#f3f1e8 40%,#e3e2dc 55%,#d2d2cf 68%,#bcbec1 80%,#a3a9b2 92%,#929aa7 100%);box-shadow:0 0 3px 1px rgba(120,120,125,.6);"></div><div style="left:16px;top:14px;width:272px;height:272px;border-radius:50%;background:radial-gradient(circle at 28% 52%,rgba(255,240,200,.35) 0,rgba(255,240,200,0) 45%),linear-gradient(180deg,rgba(255,255,255,.12) 0,rgba(255,255,255,0) 40%,rgba(70,75,90,.28) 100%);"></div></div>
<div style="left:226px;top:474px;width:305px;height:2px;background:#3d3d3d;"></div>
<div style="left:529.5px;top:174px;width:2px;height:301px;background:#404040;"></div>
<div style="left:2413px;top:180px;width:24px;height:1690px;border-radius:12px;background:#333333;box-shadow:0 0 0 1.5px #474747;"></div>
<div style="left:2414px;top:210px;width:21.5px;height:1451px;border-radius:10px;background:linear-gradient(90deg,#626262 0,#727272 12%,#6e6e6e 30%,#6c6c6c 80%,#606060 100%);"></div>
<svg style="left:2414px;top:183px" width="22" height="26" viewBox="0 0 22 26"><path d="M11 4 L19 22 L11 17 L3 22 Z" fill="#9a9a9a"/></svg>
<svg style="left:2414px;top:1846px" width="22" height="22" viewBox="0 0 22 22"><path d="M11 19 L18 3 L11 8 L4 3 Z" fill="#8a8a8a"/></svg>
<div class="fld" style="left:228px;top:489.5px;width:746px;height:39.5px;"></div>
<div class="t" style="left:240.25px;top:498.05px;font-size:28px;line-height:28px;color:#c6c6c6;letter-spacing:1.55px;">wood 2</div>
<div class="fld" style="left:228px;top:540px;width:671.5px;height:39.5px;"></div>
<div style="left:903.5px;top:540px;width:29.5px;height:41px;border-radius:5px;background:linear-gradient(#7a7a7a,#666 50%,#5a5a5a);box-shadow:0 0 0 1.5px #3b3b3b, inset 0 1.5px 0 rgba(255,255,255,.12);"></div>
<svg style="left:913px;top:552px" width="11" height="16" viewBox="0 0 11 16"><path d="M1 0.5 L10.5 8 L1 15.5 Z" fill="#e6e6e6"/></svg>
<svg style="left:936px;top:538.5px" width="42" height="42" viewBox="0 0 42 42"><circle cx="21" cy="21" r="19.5" fill="#d9d9d9" stroke="#2e2e2e" stroke-width="2"/><path d="M10.5 8.5 L32 18 L23.5 21 L31 31 L27 34 L19.5 24.5 L14.5 31 Z" fill="#222"/></svg>
<div style="left:226px;top:591.5px;width:754px;height:6px;background:linear-gradient(#3d3d3d 0,#3b3b3b 40%,#595959 47%,#5d5d5d 90%,#525252 100%);"></div>
<div class="dot" style="left:229.5px;top:611px;width:36px;height:36px;"></div>
<div class="t" style="left:274.25px;top:616.1px;font-size:28px;line-height:28px;color:#cbcbcb;letter-spacing:0.12px;">Preview Quality</div>
<div style="left:473px;top:635.9px;width:77px;height:3.4px;background:radial-gradient(circle at 50% 50%,#a8a8a8 0,#a8a8a8 1.1px,rgba(168,168,168,0) 1.9px) 0 0/15.4px 3.4px repeat-x;"></div>
<div class="dot" style="left:229.5px;top:658.6px;width:36px;height:36px;"></div>
<div class="t" style="left:274.25px;top:663.7px;font-size:28px;line-height:28px;color:#cbcbcb;letter-spacing:-0.16px;">Map Preview Size</div>
<div style="left:503.8px;top:683.5px;width:46.2px;height:3.4px;background:radial-gradient(circle at 50% 50%,#a8a8a8 0,#a8a8a8 1.1px,rgba(168,168,168,0) 1.9px) 0 0/15.4px 3.4px repeat-x;"></div>
<div class="dot" style="left:229.5px;top:723.2px;width:36px;height:36px;"></div>
<div class="t" style="left:275.25px;top:728.3px;font-size:28px;line-height:28px;color:#cbcbcb;letter-spacing:-0.06px;">Convert C4D Bitmaps</div>
<div class="dot" style="left:229.5px;top:771px;width:36px;height:36px;"></div>
<div class="t" style="left:274.25px;top:776.1px;font-size:28px;line-height:28px;color:#cbcbcb;letter-spacing:-0.44px;">Bake C4D 2D Shaders</div>
<div class="dot" style="left:229.5px;top:818.7px;width:36px;height:36px;"></div>
<div class="t" style="left:274.25px;top:823.8px;font-size:28px;line-height:28px;color:#cbcbcb;letter-spacing:0.56px;">Bake Resolution</div>
<div style="left:488.4px;top:843.6px;width:61.6px;height:3.4px;background:radial-gradient(circle at 50% 50%,#a8a8a8 0,#a8a8a8 1.1px,rgba(168,168,168,0) 1.9px) 0 0/15.4px 3.4px repeat-x;"></div>
<div class="dot" style="left:229.5px;top:881px;width:36px;height:36px;"></div>
<div class="t" style="left:275.25px;top:886.1px;font-size:28px;line-height:28px;color:#cbcbcb;letter-spacing:0.55px;">Overridable</div>
<div style="left:426.8px;top:905.9px;width:123.2px;height:3.4px;background:radial-gradient(circle at 50% 50%,#a8a8a8 0,#a8a8a8 1.1px,rgba(168,168,168,0) 1.9px) 0 0/15.4px 3.4px repeat-x;"></div>
<div class="dot" style="left:229.5px;top:946.2px;width:36px;height:36px;"></div>
<div class="t" style="left:274.25px;top:951.3px;font-size:28px;line-height:28px;color:#cbcbcb;letter-spacing:1.04px;">MatID</div>
<div style="left:349.8px;top:971.1px;width:200.2px;height:3.4px;background:radial-gradient(circle at 50% 50%,#a8a8a8 0,#a8a8a8 1.1px,rgba(168,168,168,0) 1.9px) 0 0/15.4px 3.4px repeat-x;"></div>
<div class="dot" style="left:229.5px;top:993.4px;width:36px;height:36px;"></div>
<div class="t" style="left:274.25px;top:998.5px;font-size:28px;line-height:28px;color:#cbcbcb;letter-spacing:0.85px;">MtlID Color</div>
<div style="left:426.8px;top:1018.3px;width:123.2px;height:3.4px;background:radial-gradient(circle at 50% 50%,#a8a8a8 0,#a8a8a8 1.1px,rgba(168,168,168,0) 1.9px) 0 0/15.4px 3.4px repeat-x;"></div>
<div class="dot" style="left:229.5px;top:1058px;width:36px;height:36px;"></div>
<div class="t" style="left:274.25px;top:1063.1px;font-size:28px;line-height:28px;color:#cbcbcb;letter-spacing:-0.15px;">Preview Gloss Subdivs</div>
<div class="dot" style="left:229.5px;top:1125.8px;width:36px;height:36px;"></div>
<div class="t" style="left:274.25px;top:1130.9px;font-size:28px;line-height:28px;color:#cbcbcb;letter-spacing:0.38px;">Round Edges</div>
<div class="dd" style="left:562px;top:606.7px;width:415px;height:38.8px;"></div>
<div class="t" style="left:580.25px;top:613.6px;font-size:28px;line-height:28px;color:#d4d4d4;letter-spacing:1.5px;">Medium</div>
<svg style="left:946px;top:620.6px" width="23" height="12" viewBox="0 0 23 12" opacity="1"><defs><linearGradient id="ag" x1="0" y1="0" x2="0" y2="1"><stop offset="0" stop-color="#f2f2f2"/><stop offset="1" stop-color="#b4b4b4"/></linearGradient></defs><path d="M0.5 0.5 L22.5 0.5 L11.5 11.5 Z" fill="url(#ag)"/></svg>
<div class="dd" style="left:562px;top:655px;width:415px;height:38.5px;"></div>
<div class="t" style="left:580.25px;top:661.75px;font-size:28px;line-height:28px;color:#d4d4d4;letter-spacing:0px;">Default (256x256)</div>
<svg style="left:946px;top:668.75px" width="23" height="12" viewBox="0 0 23 12" opacity="1"><defs><linearGradient id="ag" x1="0" y1="0" x2="0" y2="1"><stop offset="0" stop-color="#f2f2f2"/><stop offset="1" stop-color="#b4b4b4"/></linearGradient></defs><path d="M0.5 0.5 L22.5 0.5 L11.5 11.5 Z" fill="url(#ag)"/></svg>
<div style="left:226px;top:704px;width:754px;height:6px;background:linear-gradient(#3d3d3d 0,#3b3b3b 40%,#595959 47%,#5d5d5d 90%,#525252 100%);"></div>
<div class="dd" style="left:562px;top:720px;width:415px;height:38.5px;"></div>
<div class="t" style="left:582px;top:726.75px;font-size:28px;line-height:28px;color:#d4d4d4;letter-spacing:-3.12px;">Yes</div>
<svg style="left:946px;top:733.75px" width="23" height="12" viewBox="0 0 23 12" opacity="1"><defs><linearGradient id="ag" x1="0" y1="0" x2="0" y2="1"><stop offset="0" stop-color="#f2f2f2"/><stop offset="1" stop-color="#b4b4b4"/></linearGradient></defs><path d="M0.5 0.5 L22.5 0.5 L11.5 11.5 Z" fill="url(#ag)"/></svg>
<div class="dd" style="left:562px;top:767.5px;width:415px;height:38.5px;"></div>
<div class="t" style="left:582px;top:774.25px;font-size:28px;line-height:28px;color:#d4d4d4;letter-spacing:-3.12px;">Yes</div>
<svg style="left:946px;top:781.25px" width="23" height="12" viewBox="0 0 23 12" opacity="1"><defs><linearGradient id="ag" x1="0" y1="0" x2="0" y2="1"><stop offset="0" stop-color="#f2f2f2"/><stop offset="1" stop-color="#b4b4b4"/></linearGradient></defs><path d="M0.5 0.5 L22.5 0.5 L11.5 11.5 Z" fill="url(#ag)"/></svg>
<div class="dd" style="left:562px;top:815px;width:415px;height:38.5px;"></div>
<div class="t" style="left:582.5px;top:821.75px;font-size:28px;line-height:28px;color:#d4d4d4;"></div>
<svg style="left:946px;top:828.75px" width="23" height="12" viewBox="0 0 23 12" opacity="1"><defs><linearGradient id="ag" x1="0" y1="0" x2="0" y2="1"><stop offset="0" stop-color="#f2f2f2"/><stop offset="1" stop-color="#b4b4b4"/></linearGradient></defs><path d="M0.5 0.5 L22.5 0.5 L11.5 11.5 Z" fill="url(#ag)"/></svg>
<div class="t" style="left:581px;top:821.8px;font-size:28px;line-height:28px;color:#d4d4d4;letter-spacing:-0.78px;">512x512</div>
<div class="t" style="left:703.8px;top:821.8px;font-size:28px;line-height:28px;color:#d4d4d4;letter-spacing:0.36px;">16Bit</div>
<div class="t" style="left:792.1px;top:821.8px;font-size:28px;line-height:28px;color:#d4d4d4;letter-spacing:-0.64px;">(2 MB)</div>
<div style="left:226px;top:864px;width:754px;height:6px;background:linear-gradient(#3d3d3d 0,#3b3b3b 40%,#595959 47%,#5d5d5d 90%,#525252 100%);"></div>
<div class="cbk" style="left:560.9px;top:881.6px;width:30.8px;height:30.8px;"></div>
<svg style="left:560.9px;top:881.6px" width="31" height="31" viewBox="0 0 30.8 30.8"><path d="M2.4 17.6 L6.4 15.2 L8.6 21.2 C13.5 14 20.5 6.8 28.4 1.6 L29.8 3.6 C21.5 10 13.5 18 8 27 L5.2 26.4 Z" fill="#cfcfcf"/></svg>
<div style="left:226px;top:926px;width:754px;height:6px;background:linear-gradient(#3d3d3d 0,#3b3b3b 40%,#595959 47%,#5d5d5d 90%,#525252 100%);"></div>
<div class="fld" style="left:563px;top:942px;width:164.5px;height:40.5px;"></div>
<div class="t" style="left:574px;top:951.05px;font-size:28px;line-height:28px;color:#c6c6c6;">0</div>
<svg style="left:710.5px;top:951.55px" width="14" height="23" viewBox="0 0 14 23"><path d="M7 0.3 L13.4 10.2 L0.6 10.2 Z M7 22.7 L13.4 12.8 L0.6 12.8 Z" fill="#8e8e8e"/></svg>
<div style="left:560.7px;top:990.5px;width:72.5px;height:34px;background:#000;box-shadow:0 0 0 1px #3a3a3a;"></div>
<div style="left:226px;top:1038.3px;width:754px;height:6px;background:linear-gradient(#3d3d3d 0,#3b3b3b 40%,#595959 47%,#5d5d5d 90%,#525252 100%);"></div>
<div class="cbk" style="left:566.4px;top:1059.6px;width:30.8px;height:30.8px;"></div>
<svg style="left:566.4px;top:1059.6px" width="31" height="31" viewBox="0 0 30.8 30.8"><path d="M2.4 17.6 L6.4 15.2 L8.6 21.2 C13.5 14 20.5 6.8 28.4 1.6 L29.8 3.6 C21.5 10 13.5 18 8 27 L5.2 26.4 Z" fill="#cfcfcf"/></svg>
<div class="fld" style="left:603.6px;top:1054.5px;width:163.5px;height:40.5px;"></div>
<div class="t" style="left:614.6px;top:1063.55px;font-size:28px;line-height:28px;color:#c6c6c6;">8</div>
<svg style="left:750.1px;top:1064.05px" width="14" height="23" viewBox="0 0 14 23"><path d="M7 0.3 L13.4 10.2 L0.6 10.2 Z M7 22.7 L13.4 12.8 L0.6 12.8 Z" fill="#8e8e8e"/></svg>
<div style="left:226px;top:1106px;width:754px;height:6px;background:linear-gradient(#3d3d3d 0,#3b3b3b 40%,#595959 47%,#5d5d5d 90%,#525252 100%);"></div>
<div class="cb" style="left:460.6px;top:1126.9px;width:26.8px;height:26.8px;"></div>
<div class="fld" style="left:493.5px;top:1122.5px;width:163.5px;height:40.5px;"></div>
<div class="t" style="left:504.25px;top:1131.55px;font-size:28px;line-height:28px;color:#c6c6c6;">2</div>
<svg style="left:640px;top:1132.05px" width="14" height="23" viewBox="0 0 14 23"><path d="M7 0.3 L13.4 10.2 L0.6 10.2 Z M7 22.7 L13.4 12.8 L0.6 12.8 Z" fill="#8e8e8e"/></svg>
<div style="left:226px;top:1174.7px;width:754px;height:6px;background:linear-gradient(#3d3d3d 0,#3b3b3b 40%,#595959 47%,#5d5d5d 90%,#525252 100%);"></div>
<div class="dot" style="left:229.5px;top:1190.9px;width:36px;height:36px;"></div>
<div class="t" style="left:274.25px;top:1196px;font-size:28px;line-height:28px;color:#cbcbcb;letter-spacing:0.86px;">Material Matte</div>
<div class="cb" style="left:497.9px;top:1193.9px;width:26.8px;height:26.8px;"></div>
<div class="dot" style="left:229.5px;top:1235.9px;width:36px;height:36px;"></div>
<div class="t" style="left:274.25px;top:1241px;font-size:28px;line-height:28px;color:#cbcbcb;letter-spacing:1.09px;">Material Weight</div>
<div class="cbk" style="left:495.9px;top:1236.9px;width:30.8px;height:30.8px;"></div>
<svg style="left:495.9px;top:1236.9px" width="31" height="31" viewBox="0 0 30.8 30.8"><path d="M2.4 17.6 L6.4 15.2 L8.6 21.2 C13.5 14 20.5 6.8 28.4 1.6 L29.8 3.6 C21.5 10 13.5 18 8 27 L5.2 26.4 Z" fill="#cfcfcf"/></svg>
<div class="dot" style="left:229.5px;top:1280.9px;width:36px;height:36px;"></div>
<div class="t" style="left:274.25px;top:1286px;font-size:28px;line-height:28px;color:#cbcbcb;letter-spacing:1.25px;">Bump</div>
<div style="left:352.6px;top:1305.8px;width:138.6px;height:3.4px;background:radial-gradient(circle at 50% 50%,#a8a8a8 0,#a8a8a8 1.1px,rgba(168,168,168,0) 1.9px) 0 0/15.4px 3.4px repeat-x;"></div>
<div class="cbk" style="left:495.9px;top:1281.9px;width:30.8px;height:30.8px;"></div>
<svg style="left:495.9px;top:1281.9px" width="31" height="31" viewBox="0 0 30.8 30.8"><path d="M2.4 17.6 L6.4 15.2 L8.6 21.2 C13.5 14 20.5 6.8 28.4 1.6 L29.8 3.6 C21.5 10 13.5 18 8 27 L5.2 26.4 Z" fill="#cfcfcf"/></svg>
<div class="dot" style="left:229.5px;top:1325.9px;width:36px;height:36px;"></div>
<div class="t" style="left:274.25px;top:1331px;font-size:28px;line-height:28px;color:#cbcbcb;letter-spacing:0.04px;">Luminosity Layer</div>
<div class="cb" style="left:497.9px;top:1328.9px;width:26.8px;height:26.8px;"></div>
<div class="dot" style="left:229.5px;top:1370.9px;width:36px;height:36px;"></div>
<div class="t" style="left:274.25px;top:1376px;font-size:28px;line-height:28px;color:#cbcbcb;letter-spacing:-0.47px;">Flakes Layer</div>
<div style="left:429.6px;top:1395.8px;width:61.6px;height:3.4px;background:radial-gradient(circle at 50% 50%,#a8a8a8 0,#a8a8a8 1.1px,rgba(168,168,168,0) 1.9px) 0 0/15.4px 3.4px repeat-x;"></div>
<div class="cb" style="left:497.9px;top:1373.9px;width:26.8px;height:26.8px;"></div>
<div class="dot" style="left:229.5px;top:1415.9px;width:36px;height:36px;"></div>
<div class="t" style="left:275.25px;top:1421px;font-size:28px;line-height:28px;color:#cbcbcb;letter-spacing:-0.43px;">Specular Layer 5</div>
<div class="cb" style="left:497.9px;top:1418.9px;width:26.8px;height:26.8px;"></div>
<div class="dot" style="left:229.5px;top:1460.9px;width:36px;height:36px;"></div>
<div class="t" style="left:275.25px;top:1466px;font-size:28px;line-height:28px;color:#cbcbcb;letter-spacing:-0.47px;">Specular Layer 4</div>
<div class="cb" style="left:497.9px;top:1463.9px;width:26.8px;height:26.8px;"></div>
<div class="dot" style="left:229.5px;top:1505.9px;width:36px;height:36px;"></div>
<div class="t" style="left:275.25px;top:1511px;font-size:28px;line-height:28px;color:#cbcbcb;letter-spacing:-0.43px;">Specular Layer 3</div>
<div class="cb" style="left:497.9px;top:1508.9px;width:26.8px;height:26.8px;"></div>
<div class="dot" style="left:229.5px;top:1550.9px;width:36px;height:36px;"></div>
<div class="t" style="left:275.25px;top:1556px;font-size:28px;line-height:28px;color:#cbcbcb;letter-spacing:-0.42px;">Specular Layer 2</div>
<div class="cbk" style="left:495.9px;top:1551.9px;width:30.8px;height:30.8px;"></div>
<svg style="left:495.9px;top:1551.9px" width="31" height="31" viewBox="0 0 30.8 30.8"><path d="M2.4 17.6 L6.4 15.2 L8.6 21.2 C13.5 14 20.5 6.8 28.4 1.6 L29.8 3.6 C21.5 10 13.5 18 8 27 L5.2 26.4 Z" fill="#cfcfcf"/></svg>
<div class="dot" style="left:229.5px;top:1595.9px;width:36px;height:36px;"></div>
<div class="t" style="left:275.25px;top:1601px;font-size:28px;line-height:28px;color:#cbcbcb;letter-spacing:-0.58px;">Specular Layer 1</div>
<div class="cbk" style="left:495.9px;top:1596.9px;width:30.8px;height:30.8px;"></div>
<svg style="left:495.9px;top:1596.9px" width="31" height="31" viewBox="0 0 30.8 30.8"><path d="M2.4 17.6 L6.4 15.2 L8.6 21.2 C13.5 14 20.5 6.8 28.4 1.6 L29.8 3.6 C21.5 10 13.5 18 8 27 L5.2 26.4 Z" fill="#cfcfcf"/></svg>
<div class="dot" style="left:229.5px;top:1640.9px;width:36px;height:36px;"></div>
<div class="t" style="left:274.25px;top:1646px;font-size:28px;line-height:28px;color:#f2a91f;letter-spacing:0.01px;text-shadow:0.6px 0 0 #f2a91f;">Diffuse Layer 1</div>
<div class="cbk" style="left:495.9px;top:1641.9px;width:30.8px;height:30.8px;"></div>
<svg style="left:495.9px;top:1641.9px" width="31" height="31" viewBox="0 0 30.8 30.8"><path d="M2.4 17.6 L6.4 15.2 L8.6 21.2 C13.5 14 20.5 6.8 28.4 1.6 L29.8 3.6 C21.5 10 13.5 18 8 27 L5.2 26.4 Z" fill="#cfcfcf"/></svg>
<div class="dot" style="left:229.5px;top:1685.9px;width:36px;height:36px;"></div>
<div class="t" style="left:274.25px;top:1691px;font-size:28px;line-height:28px;color:#cbcbcb;letter-spacing:0.12px;">Diffuse Layer 2</div>
<div class="cbk" style="left:495.9px;top:1686.9px;width:30.8px;height:30.8px;"></div>
<svg style="left:495.9px;top:1686.9px" width="31" height="31" viewBox="0 0 30.8 30.8"><path d="M2.4 17.6 L6.4 15.2 L8.6 21.2 C13.5 14 20.5 6.8 28.4 1.6 L29.8 3.6 C21.5 10 13.5 18 8 27 L5.2 26.4 Z" fill="#cfcfcf"/></svg>
<div class="dot" style="left:229.5px;top:1730.9px;width:36px;height:36px;"></div>
<div class="t" style="left:274.25px;top:1736px;font-size:28px;line-height:28px;color:#cbcbcb;">Refraction Layer</div>
<div class="cb" style="left:497.9px;top:1733.9px;width:26.8px;height:26.8px;"></div>
<div class="dot" style="left:229.5px;top:1775.9px;width:36px;height:36px;"></div>
<div class="t" style="left:275.25px;top:1781px;font-size:28px;line-height:28px;color:#cbcbcb;letter-spacing:-2.09px;">SSS Layer</div>
<div style="left:398.8px;top:1800.8px;width:92.4px;height:3.4px;background:radial-gradient(circle at 50% 50%,#a8a8a8 0,#a8a8a8 1.1px,rgba(168,168,168,0) 1.9px) 0 0/15.4px 3.4px repeat-x;"></div>
<div class="cb" style="left:497.9px;top:1778.9px;width:26.8px;height:26.8px;"></div>
<div class="t" style="left:276.5px;top:1826px;font-size:28px;line-height:28px;color:#cbcbcb;letter-spacing:0.26px;">Assignment</div>
<div style="left:1012.5px;top:187px;width:1393.1px;height:36.7px;background:#353535;"></div>
<div class="t" style="left:1017.55px;top:194px;font-size:28px;line-height:28px;color:#d2d2d2;font-weight:bold;letter-spacing:-0.71px;">Diffuse Layer 1</div>
<div style="left:1012.5px;top:234.6px;width:1393.1px;height:36.6px;background:#6a6a6a;"></div>
<svg style="left:1040px;top:249.1px" width="19" height="11" viewBox="0 0 19 11"><path d="M0 0 L19 0 L9.5 11 Z" fill="#e0e0e0"/></svg>
<div class="t" style="left:1061.75px;top:240.6px;font-size:28px;line-height:28px;color:#d6d6d6;letter-spacing:0.79px;">Diffuse Color</div>
<div class="dot" style="left:1036.6px;top:283.6px;width:36px;height:36px;"></div>
<div class="t" style="left:1083.35px;top:288.3px;font-size:28px;line-height:28px;color:#cbcbcb;letter-spacing:0.64px;">Color</div>
<div style="left:1161.8px;top:308.3px;width:61.6px;height:3.4px;background:radial-gradient(circle at 50% 50%,#a8a8a8 0,#a8a8a8 1.1px,rgba(168,168,168,0) 1.9px) 0 0/15.4px 3.4px repeat-x;"></div>
<svg style="left:1232px;top:291px" width="17" height="10" viewBox="0 0 17 10"><path d="M0 0 L17 0 L8.5 10 Z" fill="#1e1e1e"/></svg>
<div style="left:1259.4px;top:281px;width:116.6px;height:33.6px;background:#ffad7c;"></div>
<svg style="left:1259px;top:328px" width="47" height="47" viewBox="0 0 47 47"><circle cx="23.5" cy="23.5" r="22.5" fill="#787878" stroke="#5e5e5e" stroke-width="1.5"/><g stroke="#565656" stroke-width="2.2"><line x1="23.5" y1="23.5" x2="45.5" y2="23.5"/><line x1="23.5" y1="23.5" x2="43.8" y2="31.9"/><line x1="23.5" y1="23.5" x2="39.1" y2="39.1"/><line x1="23.5" y1="23.5" x2="31.9" y2="43.8"/><line x1="23.5" y1="23.5" x2="23.5" y2="45.5"/><line x1="23.5" y1="23.5" x2="15.1" y2="43.8"/><line x1="23.5" y1="23.5" x2="7.9" y2="39.1"/><line x1="23.5" y1="23.5" x2="3.2" y2="31.9"/><line x1="23.5" y1="23.5" x2="1.5" y2="23.5"/><line x1="23.5" y1="23.5" x2="3.2" y2="15.1"/><line x1="23.5" y1="23.5" x2="7.9" y2="7.9"/><line x1="23.5" y1="23.5" x2="15.1" y2="3.2"/><line x1="23.5" y1="23.5" x2="23.5" y2="1.5"/><line x1="23.5" y1="23.5" x2="31.9" y2="3.2"/><line x1="23.5" y1="23.5" x2="39.1" y2="7.9"/><line x1="23.5" y1="23.5" x2="43.8" y2="15.1"/></g><circle cx="23.5" cy="23.5" r="9" fill="#6c6c6c" stroke="#5a5a5a" stroke-width="1.5"/><circle cx="23.5" cy="23.5" r="5" fill="#626262"/></svg>
<div style="left:1323px;top:328px;width:49px;height:48px;background:linear-gradient(160deg,#727272 0,#5c5c5c 45%,#3f3f3f 100%);box-shadow:0 0 0 1.5px #494949;"></div>
<div class="ibtn" style="left:1389px;top:328px;width:47px;height:48px;"></div>
<svg style="left:1389px;top:328px" width="47" height="48" viewBox="0 0 47 48"><path d="M5 41 L17 13 L24 28 L30 21 L42 41 Z" fill="#3f3f3f"/><circle cx="30" cy="11" r="3.6" fill="none" stroke="#3f3f3f" stroke-width="2.2"/></svg>
<div class="ibtn" style="left:1501px;top:328px;width:47.5px;height:48px;"></div>
<div class="t" style="left:1505.5px;top:332px;font-size:40px;line-height:40px;color:#545454;transform:scaleX(.47);transform-origin:0 0;">RGB</div>
<div style="left:1565.5px;top:328px;width:49px;height:48px;background:linear-gradient(#d4d4d4,#c2c2c2);box-shadow:0 0 0 1.8px #141414, inset 0 0 0 1.5px #ececec;"></div>
<div class="t" style="left:1570.5px;top:332px;font-size:40px;line-height:40px;color:#0c0c0c;transform:scaleX(.485);transform-origin:0 0;">HSV</div>
<div class="ibtn" style="left:1632px;top:328px;width:47.5px;height:48px;"></div>
<div class="t" style="left:1648px;top:332px;font-size:40px;line-height:40px;color:#545454;transform:scaleX(.5);transform-origin:0 0;">K</div>
<div class="ibtn" style="left:1696px;top:328px;width:47.5px;height:48px;"></div>
<svg style="left:1696px;top:328px" width="48" height="48" viewBox="0 0 48 48"><rect x="7" y="12" width="9" height="9" fill="#444"/><rect x="20" y="12" width="8" height="9" fill="#707070"/><rect x="31" y="12" width="10" height="11" fill="#7c7c7c"/><rect x="6" y="31" width="36" height="2.4" fill="#3e3e3e"/><circle cx="24" cy="32" r="4" fill="#3e3e3e"/></svg>
<div class="ibtn" style="left:1760.7px;top:328px;width:47.5px;height:48px;"></div>
<svg style="left:1760.7px;top:328px" width="48" height="48" viewBox="0 0 48 48"><rect x="7" y="6" width="10" height="9" fill="#454545"/><rect x="21" y="6" width="8" height="9" fill="#6f6f6f"/><rect x="32" y="6" width="9" height="9" fill="#7d7d7d"/><rect x="33" y="19" width="9" height="9" fill="#4a4a4a"/><rect x="7" y="19" width="9" height="8" fill="#727272"/><rect x="21" y="20" width="8" height="8" fill="#707070"/><rect x="8" y="32" width="9" height="8" fill="#747474"/></svg>
<svg style="left:1873px;top:327px" width="50" height="50" viewBox="0 0 50 50"><path d="M5 46 L3 43 L28 16 L34 22 L8 47 Z" fill="#757575"/><path d="M24 14 L30 9 L41 20 L36 26 Z" fill="#333"/><path d="M33 8 C36 1 44 0 47 4 C51 9 47 15 41 17 Z" fill="#333"/></svg>
<div class="sep" style="left:1256.6px;top:387px;width:1121px;height:4px;"></div>
<div class="t" style="left:1257.25px;top:413.4px;font-size:28px;line-height:28px;color:#cbcbcb;">H</div>
<div class="fld" style="left:1293px;top:404px;width:148px;height:40.8px;"></div>
<div class="t" style="left:1303.75px;top:413.2px;font-size:28px;line-height:28px;color:#c6c6c6;">24 °</div>
<svg style="left:1424px;top:413.7px" width="14" height="23" viewBox="0 0 14 23"><path d="M7 0.3 L13.4 10.2 L0.6 10.2 Z M7 22.7 L13.4 12.8 L0.6 12.8 Z" fill="#8e8e8e"/></svg>
<div style="left:1456.8px;top:409.5px;width:918.6px;height:34px;background:linear-gradient(90deg,#ff0000 0,#ffff00 16.67%,#00ff00 33.33%,#00ffff 50%,#0000ff 66.67%,#ff00ff 83.33%,#ff0000 100%);box-shadow:0 0 0 1px rgba(60,60,60,.6);"></div>
<div style="left:1514.34px;top:402px;width:7.4px;height:49px;background:#ff6a00;border:2px solid #1b1108;border-radius:2px;"></div>
<div class="t" style="left:1258.25px;top:466.4px;font-size:28px;line-height:28px;color:#cbcbcb;">S</div>
<div class="fld" style="left:1293px;top:457px;width:148px;height:40.8px;"></div>
<div class="t" style="left:1304px;top:466.2px;font-size:28px;line-height:28px;color:#c6c6c6;letter-spacing:-1px;">51 %</div>
<svg style="left:1424px;top:466.7px" width="14" height="23" viewBox="0 0 14 23"><path d="M7 0.3 L13.4 10.2 L0.6 10.2 Z M7 22.7 L13.4 12.8 L0.6 12.8 Z" fill="#8e8e8e"/></svg>
<div style="left:1456.8px;top:462.5px;width:918.6px;height:34px;background:linear-gradient(90deg,#ffffff 0,#ffb27f 51%,#ff6600 100%);box-shadow:0 0 0 1px rgba(60,60,60,.6);"></div>
<div style="left:1921.59px;top:455px;width:7.4px;height:49px;background:#ffb27f;border:2px solid #1b1108;border-radius:2px;"></div>
<div class="t" style="left:1259.5px;top:519.4px;font-size:28px;line-height:28px;color:#cbcbcb;">V</div>
<div class="fld" style="left:1293px;top:510px;width:148px;height:40.8px;"></div>
<div class="t" style="left:1303px;top:519.2px;font-size:28px;line-height:28px;color:#c6c6c6;letter-spacing:-0.48px;">100 %</div>
<svg style="left:1424px;top:519.7px" width="14" height="23" viewBox="0 0 14 23"><path d="M7 0.3 L13.4 10.2 L0.6 10.2 Z M7 22.7 L13.4 12.8 L0.6 12.8 Z" fill="#8e8e8e"/></svg>
<div style="left:1456.8px;top:515.5px;width:918.6px;height:34px;background:linear-gradient(90deg,#000000 0,#ffb07e 100%);box-shadow:0 0 0 1px rgba(60,60,60,.6);"></div>
<div style="left:2369.8px;top:508px;width:7.4px;height:49px;background:#ffb07e;border:2px solid #1b1108;border-radius:2px;"></div>
<div class="dot" style="left:1036.6px;top:568.5px;width:36px;height:36px;"></div>
<div class="t" style="left:1081.95px;top:573.6px;font-size:28px;line-height:28px;color:#cbcbcb;letter-spacing:0.59px;">Brightness</div>
<div style="left:1221.4px;top:593.6px;width:30.8px;height:3.4px;background:radial-gradient(circle at 50% 50%,#a8a8a8 0,#a8a8a8 1.1px,rgba(168,168,168,0) 1.9px) 0 0/15.4px 3.4px repeat-x;"></div>
<div class="fld" style="left:1260.7px;top:565.5px;width:164px;height:39.5px;"></div>
<div class="t" style="left:1271.45px;top:574.05px;font-size:28px;line-height:28px;color:#c6c6c6;letter-spacing:-0.52px;">65 %</div>
<svg style="left:1407.7px;top:574.55px" width="14" height="23" viewBox="0 0 14 23"><path d="M7 0.3 L13.4 10.2 L0.6 10.2 Z M7 22.7 L13.4 12.8 L0.6 12.8 Z" fill="#8e8e8e"/></svg>
<div style="left:1427px;top:567px;width:952.4px;height:35px;background:#353535;border-radius:0 4px 4px 0;box-shadow:inset 0 2px 2px rgba(0,0,0,.35),0 1.5px 0 rgba(255,255,255,.09);"></div>
<div style="left:1427px;top:567px;width:619.06px;height:35px;background:#818181;"></div>
<div style="left:2044.56px;top:567px;width:4.6px;height:35px;background:#f0a31c;border-radius:1.5px;"></div>
<div style="left:1904.8px;top:591px;width:2.2px;height:10px;background:#c28a22;"></div>
<svg style="left:1044px;top:642px" width="11" height="17" viewBox="0 0 11 17"><path d="M0 0 L11 8.5 L0 17 Z" fill="#181818"/></svg>
<div class="t" style="left:1081.8px;top:638.7px;font-size:28px;line-height:28px;color:#cbcbcb;letter-spacing:0.4px;">Texture Map</div>
<div class="pill" style="left:1259.5px;top:631.5px;width:46.5px;height:40.5px;"></div>
<svg style="left:1279px;top:645.2px" width="9" height="14" viewBox="0 0 9 14"><path d="M0.3 0.3 L8.7 7 L0.3 13.7 Z" fill="#e4e4e4"/></svg>
<div class="pill" style="left:1313px;top:631.5px;width:984px;height:40.5px;"></div>
<div class="t" style="left:1770.35px;top:639.9px;font-size:28px;line-height:28px;color:#d4d4d4;letter-spacing:1.19px;">Filter</div>
<div class="pill" style="left:2305px;top:631.5px;width:77px;height:40.5px;"></div>
<div class="t" style="left:2331px;top:640.3px;font-size:28px;line-height:28px;color:#d4d4d4;">...</div>
<div class="t" style="left:1392.55px;top:686.3px;font-size:28px;line-height:28px;color:#cbcbcb;letter-spacing:0.49px;">Sampling</div>
<div class="dd dis" style="left:1548px;top:679.5px;width:167px;height:39px;"></div>
<div class="t" style="left:1563.55px;top:686.5px;font-size:28px;line-height:28px;color:#8f8f8f;letter-spacing:1.83px;">None</div>
<svg style="left:1684px;top:693.5px" width="23" height="12" viewBox="0 0 23 12" opacity=".45"><defs><linearGradient id="ag" x1="0" y1="0" x2="0" y2="1"><stop offset="0" stop-color="#f2f2f2"/><stop offset="1" stop-color="#b4b4b4"/></linearGradient></defs><path d="M0.5 0.5 L22.5 0.5 L11.5 11.5 Z" fill="url(#ag)"/></svg>
<div class="t" style="left:1391.55px;top:735.6px;font-size:28px;line-height:28px;color:#cbcbcb;letter-spacing:0.88px;">Blur Offset</div>
<div class="fld" style="left:1548px;top:727.5px;width:168px;height:40px;"></div>
<div class="t" style="left:1559px;top:736.3px;font-size:28px;line-height:28px;color:#c6c6c6;letter-spacing:-0.62px;">0 %</div>
<svg style="left:1699px;top:736.8px" width="14" height="23" viewBox="0 0 14 23"><path d="M7 0.3 L13.4 10.2 L0.6 10.2 Z M7 22.7 L13.4 12.8 L0.6 12.8 Z" fill="#8e8e8e"/></svg>
<div class="t" style="left:1391.55px;top:785.9px;font-size:28px;line-height:28px;color:#cbcbcb;letter-spacing:-0.15px;">Blur Scale</div>
<div class="fld" style="left:1548px;top:776.7px;width:168px;height:40.5px;"></div>
<div class="t" style="left:1559px;top:785.75px;font-size:28px;line-height:28px;color:#c6c6c6;letter-spacing:-0.62px;">0 %</div>
<svg style="left:1699px;top:786.25px" width="14" height="23" viewBox="0 0 14 23"><path d="M7 0.3 L13.4 10.2 L0.6 10.2 Z M7 22.7 L13.4 12.8 L0.6 12.8 Z" fill="#8e8e8e"/></svg>
<div class="dot" style="left:1036.6px;top:835.6px;width:36px;height:36px;"></div>
<div class="t" style="left:1082.35px;top:840.7px;font-size:28px;line-height:28px;color:#cbcbcb;letter-spacing:1.04px;">Mix Mode</div>
<div style="left:1206.9px;top:860.7px;width:46.2px;height:3.4px;background:radial-gradient(circle at 50% 50%,#a8a8a8 0,#a8a8a8 1.1px,rgba(168,168,168,0) 1.9px) 0 0/15.4px 3.4px repeat-x;"></div>
<div class="dd" style="left:1259.5px;top:832.3px;width:1120.5px;height:38.7px;"></div>
<div class="t" style="left:1276.55px;top:839.15px;font-size:28px;line-height:28px;color:#d4d4d4;letter-spacing:1.43px;">None</div>
<svg style="left:2349px;top:846.15px" width="23" height="12" viewBox="0 0 23 12" opacity="1"><defs><linearGradient id="ag" x1="0" y1="0" x2="0" y2="1"><stop offset="0" stop-color="#f2f2f2"/><stop offset="1" stop-color="#b4b4b4"/></linearGradient></defs><path d="M0.5 0.5 L22.5 0.5 L11.5 11.5 Z" fill="url(#ag)"/></svg>
<div class="dot" style="left:1036.6px;top:883px;width:36px;height:36px;"></div>
<div class="t" style="left:1082.35px;top:888.1px;font-size:28px;line-height:28px;color:#cbcbcb;letter-spacing:0.86px;">Mix Strength</div>
<div class="fld" style="left:1260.4px;top:880.7px;width:163px;height:39.5px;"></div>
<div class="t" style="left:1271.4px;top:889.25px;font-size:28px;line-height:28px;color:#c6c6c6;letter-spacing:-0.25px;">0.7</div>
<svg style="left:1406.4px;top:889.75px" width="14" height="23" viewBox="0 0 14 23"><path d="M7 0.3 L13.4 10.2 L0.6 10.2 Z M7 22.7 L13.4 12.8 L0.6 12.8 Z" fill="#8e8e8e"/></svg>
<div style="left:1425.8px;top:882px;width:953.6px;height:35.5px;background:#353535;border-radius:0 4px 4px 0;box-shadow:inset 0 2px 2px rgba(0,0,0,.35),0 1.5px 0 rgba(255,255,255,.09);"></div>
<div style="left:1425.8px;top:882px;width:667.52px;height:35.5px;background:#818181;"></div>
<div style="left:2091.82px;top:882px;width:4.6px;height:35.5px;background:#f0a31c;border-radius:1.5px;"></div>
<div style="left:1904.2px;top:906.5px;width:2.2px;height:10px;background:#c28a22;"></div>
<div style="left:1256.8px;top:686.3px;width:125.6px;height:125.6px;background:linear-gradient(#7b6b67 0,#786864 50%,#7a6a65 100%);"></div>
<div style="left:1012.5px;top:938.5px;width:1393.1px;height:9px;background:linear-gradient(#454545 0,#3f3f3f 30%,#414141 58%,#5a5a5a 62%,#595959 100%);"></div>
<div style="left:1012.5px;top:959.6px;width:1393.1px;height:36.6px;background:#6a6a6a;"></div>
<svg style="left:1040px;top:974.1px" width="19" height="11" viewBox="0 0 19 11"><path d="M0 0 L19 0 L9.5 11 Z" fill="#e0e0e0"/></svg>
<div class="t" style="left:1061.75px;top:965.6px;font-size:28px;line-height:28px;color:#d6d6d6;letter-spacing:-0.03px;">Diffuse Layer Transparency</div>
<div class="dot" style="left:1036.6px;top:1008.6px;width:36px;height:36px;"></div>
<div class="t" style="left:1083.35px;top:1013.3px;font-size:28px;line-height:28px;color:#cbcbcb;letter-spacing:0.64px;">Color</div>
<div style="left:1161.8px;top:1033.3px;width:61.6px;height:3.4px;background:radial-gradient(circle at 50% 50%,#a8a8a8 0,#a8a8a8 1.1px,rgba(168,168,168,0) 1.9px) 0 0/15.4px 3.4px repeat-x;"></div>
<svg style="left:1232px;top:1016px" width="17" height="10" viewBox="0 0 17 10"><path d="M0 0 L17 0 L8.5 10 Z" fill="#1e1e1e"/></svg>
<div style="left:1259.4px;top:1006px;width:116.6px;height:33.6px;background:#ffffff;"></div>
<svg style="left:1259px;top:1053px" width="47" height="47" viewBox="0 0 47 47"><circle cx="23.5" cy="23.5" r="22.5" fill="#787878" stroke="#5e5e5e" stroke-width="1.5"/><g stroke="#565656" stroke-width="2.2"><line x1="23.5" y1="23.5" x2="45.5" y2="23.5"/><line x1="23.5" y1="23.5" x2="43.8" y2="31.9"/><line x1="23.5" y1="23.5" x2="39.1" y2="39.1"/><line x1="23.5" y1="23.5" x2="31.9" y2="43.8"/><line x1="23.5" y1="23.5" x2="23.5" y2="45.5"/><line x1="23.5" y1="23.5" x2="15.1" y2="43.8"/><line x1="23.5" y1="23.5" x2="7.9" y2="39.1"/><line x1="23.5" y1="23.5" x2="3.2" y2="31.9"/><line x1="23.5" y1="23.5" x2="1.5" y2="23.5"/><line x1="23.5" y1="23.5" x2="3.2" y2="15.1"/><line x1="23.5" y1="23.5" x2="7.9" y2="7.9"/><line x1="23.5" y1="23.5" x2="15.1" y2="3.2"/><line x1="23.5" y1="23.5" x2="23.5" y2="1.5"/><line x1="23.5" y1="23.5" x2="31.9" y2="3.2"/><line x1="23.5" y1="23.5" x2="39.1" y2="7.9"/><line x1="23.5" y1="23.5" x2="43.8" y2="15.1"/></g><circle cx="23.5" cy="23.5" r="9" fill="#6c6c6c" stroke="#5a5a5a" stroke-width="1.5"/><circle cx="23.5" cy="23.5" r="5" fill="#626262"/></svg>
<div style="left:1323px;top:1053px;width:49px;height:48px;background:linear-gradient(160deg,#727272 0,#5c5c5c 45%,#3f3f3f 100%);box-shadow:0 0 0 1.5px #494949;"></div>
<div class="ibtn" style="left:1389px;top:1053px;width:47px;height:48px;"></div>
<svg style="left:1389px;top:1053px" width="47" height="48" viewBox="0 0 47 48"><path d="M5 41 L17 13 L24 28 L30 21 L42 41 Z" fill="#3f3f3f"/><circle cx="30" cy="11" r="3.6" fill="none" stroke="#3f3f3f" stroke-width="2.2"/></svg>
<div class="ibtn" style="left:1501px;top:1053px;width:47.5px;height:48px;"></div>
<div class="t" style="left:1505.5px;top:1057px;font-size:40px;line-height:40px;color:#545454;transform:scaleX(.47);transform-origin:0 0;">RGB</div>
<div style="left:1565.5px;top:1053px;width:49px;height:48px;background:linear-gradient(#d4d4d4,#c2c2c2);box-shadow:0 0 0 1.8px #141414, inset 0 0 0 1.5px #ececec;"></div>
<div class="t" style="left:1570.5px;top:1057px;font-size:40px;line-height:40px;color:#0c0c0c;transform:scaleX(.485);transform-origin:0 0;">HSV</div>
<div class="ibtn" style="left:1632px;top:1053px;width:47.5px;height:48px;"></div>
<div class="t" style="left:1648px;top:1057px;font-size:40px;line-height:40px;color:#545454;transform:scaleX(.5);transform-origin:0 0;">K</div>
<div class="ibtn" style="left:1696px;top:1053px;width:47.5px;height:48px;"></div>
<svg style="left:1696px;top:1053px" width="48" height="48" viewBox="0 0 48 48"><rect x="7" y="12" width="9" height="9" fill="#444"/><rect x="20" y="12" width="8" height="9" fill="#707070"/><rect x="31" y="12" width="10" height="11" fill="#7c7c7c"/><rect x="6" y="31" width="36" height="2.4" fill="#3e3e3e"/><circle cx="24" cy="32" r="4" fill="#3e3e3e"/></svg>
<div class="ibtn" style="left:1760.7px;top:1053px;width:47.5px;height:48px;"></div>
<svg style="left:1760.7px;top:1053px" width="48" height="48" viewBox="0 0 48 48"><rect x="7" y="6" width="10" height="9" fill="#454545"/><rect x="21" y="6" width="8" height="9" fill="#6f6f6f"/><rect x="32" y="6" width="9" height="9" fill="#7d7d7d"/><rect x="33" y="19" width="9" height="9" fill="#4a4a4a"/><rect x="7" y="19" width="9" height="8" fill="#727272"/><rect x="21" y="20" width="8" height="8" fill="#707070"/><rect x="8" y="32" width="9" height="8" fill="#747474"/></svg>
<svg style="left:1873px;top:1052px" width="50" height="50" viewBox="0 0 50 50"><path d="M5 46 L3 43 L28 16 L34 22 L8 47 Z" fill="#757575"/><path d="M24 14 L30 9 L41 20 L36 26 Z" fill="#333"/><path d="M33 8 C36 1 44 0 47 4 C51 9 47 15 41 17 Z" fill="#333"/></svg>
<div class="sep" style="left:1256.6px;top:1112px;width:1121px;height:4px;"></div>
<div class="t" style="left:1257.25px;top:1138.4px;font-size:28px;line-height:28px;color:#cbcbcb;">H</div>
<div class="fld" style="left:1293px;top:1129px;width:148px;height:40.8px;"></div>
<div class="t" style="left:1304px;top:1138.2px;font-size:28px;line-height:28px;color:#c6c6c6;letter-spacing:0.75px;">0 °</div>
<svg style="left:1424px;top:1138.7px" width="14" height="23" viewBox="0 0 14 23"><path d="M7 0.3 L13.4 10.2 L0.6 10.2 Z M7 22.7 L13.4 12.8 L0.6 12.8 Z" fill="#8e8e8e"/></svg>
<div style="left:1456.8px;top:1134.5px;width:918.6px;height:34px;background:linear-gradient(90deg,#ff0000 0,#ffff00 16.67%,#00ff00 33.33%,#00ffff 50%,#0000ff 66.67%,#ff00ff 83.33%,#ff0000 100%);box-shadow:0 0 0 1px rgba(60,60,60,.6);"></div>
<div style="left:1455.8px;top:1127px;width:7.4px;height:49px;background:#ff2a2a;border:2px solid #f4f4f4;border-radius:2px;"></div>
<div class="t" style="left:1258.25px;top:1191.4px;font-size:28px;line-height:28px;color:#cbcbcb;">S</div>
<div class="fld" style="left:1293px;top:1182px;width:148px;height:40.8px;"></div>
<div class="t" style="left:1304px;top:1191.2px;font-size:28px;line-height:28px;color:#c6c6c6;letter-spacing:-0.62px;">0 %</div>
<svg style="left:1424px;top:1191.7px" width="14" height="23" viewBox="0 0 14 23"><path d="M7 0.3 L13.4 10.2 L0.6 10.2 Z M7 22.7 L13.4 12.8 L0.6 12.8 Z" fill="#8e8e8e"/></svg>
<div style="left:1456.8px;top:1187.5px;width:918.6px;height:34px;background:linear-gradient(90deg,#ffffff 0,#ff0000 100%);box-shadow:0 0 0 1px rgba(60,60,60,.6);"></div>
<div style="left:1455.8px;top:1180px;width:7.4px;height:49px;background:#ffffff;border:2px solid #1b1108;border-radius:2px;"></div>
<div class="t" style="left:1259.5px;top:1244.4px;font-size:28px;line-height:28px;color:#cbcbcb;">V</div>
<div class="fld" style="left:1293px;top:1235px;width:148px;height:40.8px;"></div>
<div class="t" style="left:1303px;top:1244.2px;font-size:28px;line-height:28px;color:#c6c6c6;letter-spacing:-0.48px;">100 %</div>
<svg style="left:1424px;top:1244.7px" width="14" height="23" viewBox="0 0 14 23"><path d="M7 0.3 L13.4 10.2 L0.6 10.2 Z M7 22.7 L13.4 12.8 L0.6 12.8 Z" fill="#8e8e8e"/></svg>
<div style="left:1456.8px;top:1240.5px;width:918.6px;height:34px;background:linear-gradient(90deg,#000000 0,#ffffff 100%);box-shadow:0 0 0 1px rgba(60,60,60,.6);"></div>
<div style="left:2369.8px;top:1233px;width:7.4px;height:49px;background:#ffffff;border:2px solid #1b1108;border-radius:2px;"></div>
<div class="dot" style="left:1036.6px;top:1293.5px;width:36px;height:36px;"></div>
<div class="t" style="left:1084.2px;top:1298.6px;font-size:28px;line-height:28px;color:#cbcbcb;letter-spacing:0.82px;">Amount</div>
<div style="left:1190.6px;top:1318.6px;width:61.6px;height:3.4px;background:radial-gradient(circle at 50% 50%,#a8a8a8 0,#a8a8a8 1.1px,rgba(168,168,168,0) 1.9px) 0 0/15.4px 3.4px repeat-x;"></div>
<div class="fld" style="left:1260.7px;top:1290.5px;width:164px;height:39.5px;"></div>
<div class="t" style="left:1271.7px;top:1299.05px;font-size:28px;line-height:28px;color:#c6c6c6;letter-spacing:-0.62px;">0 %</div>
<svg style="left:1407.7px;top:1299.55px" width="14" height="23" viewBox="0 0 14 23"><path d="M7 0.3 L13.4 10.2 L0.6 10.2 Z M7 22.7 L13.4 12.8 L0.6 12.8 Z" fill="#8e8e8e"/></svg>
<div style="left:1427px;top:1292px;width:952.4px;height:35px;background:#353535;border-radius:0 4px 4px 0;box-shadow:inset 0 2px 2px rgba(0,0,0,.35),0 1.5px 0 rgba(255,255,255,.09);"></div>
<div style="left:1427px;top:1292px;width:4.6px;height:35px;background:#f0a31c;border-radius:1.5px;"></div>
<div style="left:1904.8px;top:1316px;width:2.2px;height:10px;background:#c28a22;"></div>
<svg style="left:1044px;top:1367px" width="11" height="17" viewBox="0 0 11 17"><path d="M0 0 L11 8.5 L0 17 Z" fill="#181818"/></svg>
<div class="t" style="left:1081.8px;top:1363.7px;font-size:28px;line-height:28px;color:#cbcbcb;letter-spacing:0.4px;">Texture Map</div>
<div class="pill" style="left:1259.5px;top:1356.5px;width:46.5px;height:40.5px;"></div>
<svg style="left:1279px;top:1370.2px" width="9" height="14" viewBox="0 0 9 14"><path d="M0.3 0.3 L8.7 7 L0.3 13.7 Z" fill="#e4e4e4"/></svg>
<div class="pill" style="left:1313px;top:1356.5px;width:984px;height:40.5px;"></div>
<div class="t" style="left:1428.55px;top:1364.9px;font-size:28px;line-height:28px;color:#d4d4d4;letter-spacing:0.04px;">&lt;VR&gt; DGruwier_dirt_04_scratches_smudge_specs_white.tif</div>
<div class="pill" style="left:2305px;top:1356.5px;width:77px;height:40.5px;"></div>
<div class="t" style="left:2331px;top:1365.3px;font-size:28px;line-height:28px;color:#d4d4d4;">...</div>
<div class="t" style="left:1392.55px;top:1411.3px;font-size:28px;line-height:28px;color:#cbcbcb;letter-spacing:0.49px;">Sampling</div>
<div class="dd dis" style="left:1548px;top:1404.5px;width:167px;height:39px;"></div>
<div class="t" style="left:1563.55px;top:1411.5px;font-size:28px;line-height:28px;color:#8f8f8f;letter-spacing:1.83px;">None</div>
<svg style="left:1684px;top:1418.5px" width="23" height="12" viewBox="0 0 23 12" opacity=".45"><defs><linearGradient id="ag" x1="0" y1="0" x2="0" y2="1"><stop offset="0" stop-color="#f2f2f2"/><stop offset="1" stop-color="#b4b4b4"/></linearGradient></defs><path d="M0.5 0.5 L22.5 0.5 L11.5 11.5 Z" fill="url(#ag)"/></svg>
<div class="t" style="left:1391.55px;top:1460.6px;font-size:28px;line-height:28px;color:#cbcbcb;letter-spacing:0.88px;">Blur Offset</div>
<div class="fld" style="left:1548px;top:1452.5px;width:168px;height:40px;"></div>
<div class="t" style="left:1559px;top:1461.3px;font-size:28px;line-height:28px;color:#c6c6c6;letter-spacing:-0.62px;">0 %</div>
<svg style="left:1699px;top:1461.8px" width="14" height="23" viewBox="0 0 14 23"><path d="M7 0.3 L13.4 10.2 L0.6 10.2 Z M7 22.7 L13.4 12.8 L0.6 12.8 Z" fill="#8e8e8e"/></svg>
<div class="t" style="left:1391.55px;top:1510.9px;font-size:28px;line-height:28px;color:#cbcbcb;letter-spacing:-0.15px;">Blur Scale</div>
<div class="fld" style="left:1548px;top:1501.7px;width:168px;height:40.5px;"></div>
<div class="t" style="left:1559px;top:1510.75px;font-size:28px;line-height:28px;color:#c6c6c6;letter-spacing:-0.62px;">0 %</div>
<svg style="left:1699px;top:1511.25px" width="14" height="23" viewBox="0 0 14 23"><path d="M7 0.3 L13.4 10.2 L0.6 10.2 Z M7 22.7 L13.4 12.8 L0.6 12.8 Z" fill="#8e8e8e"/></svg>
<div class="dot" style="left:1036.6px;top:1560.6px;width:36px;height:36px;"></div>
<div class="t" style="left:1082.35px;top:1565.7px;font-size:28px;line-height:28px;color:#cbcbcb;letter-spacing:1.04px;">Mix Mode</div>
<div style="left:1206.9px;top:1585.7px;width:46.2px;height:3.4px;background:radial-gradient(circle at 50% 50%,#a8a8a8 0,#a8a8a8 1.1px,rgba(168,168,168,0) 1.9px) 0 0/15.4px 3.4px repeat-x;"></div>
<div class="dd" style="left:1259.5px;top:1557.3px;width:1120.5px;height:38.7px;"></div>
<div class="t" style="left:1276.55px;top:1564.15px;font-size:28px;line-height:28px;color:#d4d4d4;letter-spacing:1.43px;">None</div>
<svg style="left:2349px;top:1571.15px" width="23" height="12" viewBox="0 0 23 12" opacity="1"><defs><linearGradient id="ag" x1="0" y1="0" x2="0" y2="1"><stop offset="0" stop-color="#f2f2f2"/><stop offset="1" stop-color="#b4b4b4"/></linearGradient></defs><path d="M0.5 0.5 L22.5 0.5 L11.5 11.5 Z" fill="url(#ag)"/></svg>
<div class="dot" style="left:1036.6px;top:1608px;width:36px;height:36px;"></div>
<div class="t" style="left:1082.35px;top:1613.1px;font-size:28px;line-height:28px;color:#cbcbcb;letter-spacing:0.86px;">Mix Strength</div>
<div class="fld" style="left:1260.4px;top:1605.7px;width:163px;height:39.5px;"></div>
<div class="t" style="left:1270.4px;top:1614.25px;font-size:28px;line-height:28px;color:#c6c6c6;">1</div>
<svg style="left:1406.4px;top:1614.75px" width="14" height="23" viewBox="0 0 14 23"><path d="M7 0.3 L13.4 10.2 L0.6 10.2 Z M7 22.7 L13.4 12.8 L0.6 12.8 Z" fill="#8e8e8e"/></svg>
<div style="left:1425.8px;top:1607px;width:953.6px;height:35.5px;background:#353535;border-radius:0 4px 4px 0;box-shadow:inset 0 2px 2px rgba(0,0,0,.35),0 1.5px 0 rgba(255,255,255,.09);"></div>
<div style="left:1425.8px;top:1607px;width:953.6px;height:35.5px;background:#818181;"></div>
<div style="left:2375px;top:1607px;width:4.6px;height:35.5px;background:#f0a31c;border-radius:1.5px;"></div>
<div style="left:1904.2px;top:1631.5px;width:2.2px;height:10px;background:#c28a22;"></div>
<div style="left:1256.8px;top:1411.3px;width:125.6px;height:125.6px;overflow:hidden;background:#ececec;"><div style="left:0;top:0;width:126px;height:126px;background:radial-gradient(ellipse 13px 3px at 47% 77%,rgba(120,120,120,0.24),rgba(128,128,128,0)),radial-gradient(ellipse 8px 2px at 60% 33%,rgba(125,125,125,0.15),rgba(128,128,128,0)),radial-gradient(ellipse 21px 5px at 50% 81%,rgba(145,145,145,0.13),rgba(128,128,128,0)),radial-gradient(ellipse 10px 5px at 94% 1%,rgba(132,132,132,0.27),rgba(128,128,128,0)),radial-gradient(ellipse 11px 2px at 38% 99%,rgba(91,91,91,0.28),rgba(128,128,128,0)),radial-gradient(ellipse 14px 5px at 76% 92%,rgba(148,148,148,0.29),rgba(128,128,128,0)),radial-gradient(ellipse 19px 5px at 93% 73%,rgba(118,118,118,0.31),rgba(128,128,128,0)),radial-gradient(ellipse 10px 4px at 12% 4%,rgba(98,98,98,0.21),rgba(128,128,128,0)),radial-gradient(ellipse 14px 5px at 99% 80%,rgba(144,144,144,0.17),rgba(128,128,128,0)),radial-gradient(ellipse 22px 5px at 73% 44%,rgba(124,124,124,0.23),rgba(128,128,128,0)),radial-gradient(ellipse 13px 4px at 87% 3%,rgba(144,144,144,0.16),rgba(128,128,128,0)),radial-gradient(ellipse 11px 4px at 69% 73%,rgba(126,126,126,0.12),rgba(128,128,128,0)),radial-gradient(ellipse 12px 4px at 36% 15%,rgba(94,94,94,0.21),rgba(128,128,128,0)),radial-gradient(ellipse 21px 2px at 44% 8%,rgba(116,116,116,0.30),rgba(128,128,128,0)),radial-gradient(ellipse 6px 4px at 54% 98%,rgba(116,116,116,0.29),rgba(128,128,128,0)),radial-gradient(ellipse 7px 2px at 48% 91%,rgba(127,127,127,0.17),rgba(128,128,128,0)),radial-gradient(ellipse 14px 3px at 4% 39%,rgba(90,90,90,0.12),rgba(128,128,128,0)),radial-gradient(ellipse 7px 3px at 52% 37%,rgba(129,129,129,0.16),rgba(128,128,128,0)),radial-gradient(ellipse 7px 4px at 40% 46%,rgba(98,98,98,0.30),rgba(128,128,128,0)),radial-gradient(ellipse 18px 5px at 58% 66%,rgba(114,114,114,0.24),rgba(128,128,128,0)),radial-gradient(ellipse 9px 4px at 55% 81%,rgba(136,136,136,0.26),rgba(128,128,128,0)),radial-gradient(ellipse 15px 5px at 33% 66%,rgba(109,109,109,0.22),rgba(128,128,128,0)),radial-gradient(ellipse 6px 5px at 74% 40%,rgba(91,91,91,0.18),rgba(128,128,128,0)),radial-gradient(ellipse 10px 2px at 81% 80%,rgba(111,111,111,0.20),rgba(128,128,128,0)),radial-gradient(ellipse 17px 4px at 94% 62%,rgba(91,91,91,0.23),rgba(128,128,128,0)),radial-gradient(ellipse 6px 4px at 32% 80%,rgba(119,119,119,0.17),rgba(128,128,128,0)),radial-gradient(ellipse 16px 3px at 46% 23%,rgba(110,110,110,0.27),rgba(128,128,128,0)),radial-gradient(ellipse 14px 4px at 100% 48%,rgba(96,96,96,0.27),rgba(128,128,128,0)),radial-gradient(ellipse 6px 3px at 39% 64%,rgba(104,104,104,0.24),rgba(128,128,128,0)),radial-gradient(ellipse 14px 3px at 41% 23%,rgba(133,133,133,0.20),rgba(128,128,128,0)),radial-gradient(ellipse 9px 2px at 76% 41%,rgba(150,150,150,0.17),rgba(128,128,128,0)),radial-gradient(ellipse 13px 5px at 21% 10%,rgba(111,111,111,0.26),rgba(128,128,128,0)),radial-gradient(ellipse 12px 5px at 34% 28%,rgba(140,140,140,0.13),rgba(128,128,128,0)),radial-gradient(ellipse 22px 3px at 40% 73%,rgba(101,101,101,0.29),rgba(128,128,128,0));"></div><div style="left:0;top:0;width:126px;height:126px;background:repeating-linear-gradient(172deg,rgba(0,0,0,0) 0,rgba(0,0,0,0) 4px,rgba(100,100,100,.07) 5px,rgba(0,0,0,0) 8px);"></div></div>
<div class="dot" style="left:1036.6px;top:1656px;width:36px;height:36px;"></div>
<div class="t" style="left:1081.9px;top:1660.3px;font-size:28px;line-height:28px;color:#cbcbcb;letter-spacing:0.7px;">Invert</div>
<div style="left:1162.4px;top:1680.3px;width:91.2px;height:3.4px;background:radial-gradient(circle at 50% 50%,#a8a8a8 0,#a8a8a8 1.1px,rgba(168,168,168,0) 1.9px) 0 0/15.2px 3.4px repeat-x;"></div>
<div class="cbk" style="left:1258.1px;top:1656.4px;width:30.8px;height:30.8px;"></div>
<svg style="left:1258.1px;top:1656.4px" width="31" height="31" viewBox="0 0 30.8 30.8"><path d="M2.4 17.6 L6.4 15.2 L8.6 21.2 C13.5 14 20.5 6.8 28.4 1.6 L29.8 3.6 C21.5 10 13.5 18 8 27 L5.2 26.4 Z" fill="#cfcfcf"/></svg>
<div style="left:1012.5px;top:1712.3px;width:1393.1px;height:36.6px;background:#6a6a6a;"></div>
<svg style="left:1040px;top:1726.8px" width="19" height="11" viewBox="0 0 19 11"><path d="M0 0 L19 0 L9.5 11 Z" fill="#e0e0e0"/></svg>
<div class="t" style="left:1061.75px;top:1718.3px;font-size:28px;line-height:28px;color:#d6d6d6;letter-spacing:1.12px;">Diffuse Options</div>
<div class="dot" style="left:1036.6px;top:1763.7px;width:36px;height:36px;"></div>
<div class="t" style="left:1082.15px;top:1768.6px;font-size:28px;line-height:28px;color:#cbcbcb;letter-spacing:0.49px;">Roughness</div>
<div style="left:1235.98px;top:1788.6px;width:181.8px;height:3.4px;background:radial-gradient(circle at 50% 50%,#a8a8a8 0,#a8a8a8 1.1px,rgba(168,168,168,0) 1.9px) 0 0/15.15px 3.4px repeat-x;"></div>
<div class="fld" style="left:1435.3px;top:1761.3px;width:166px;height:39.3px;"></div>
<div class="t" style="left:1446.3px;top:1769.75px;font-size:28px;line-height:28px;color:#c6c6c6;">0</div>
<svg style="left:1584.3px;top:1770.25px" width="14" height="23" viewBox="0 0 14 23"><path d="M7 0.3 L13.4 10.2 L0.6 10.2 Z M7 22.7 L13.4 12.8 L0.6 12.8 Z" fill="#8e8e8e"/></svg>
<div style="left:1603px;top:1759.5px;width:775.4px;height:37px;background:#353535;border-radius:0 4px 4px 0;box-shadow:inset 0 2px 2px rgba(0,0,0,.35),0 1.5px 0 rgba(255,255,255,.09);"></div>
<div style="left:1603px;top:1759.5px;width:4.6px;height:37px;background:#f0a31c;border-radius:1.5px;"></div>
<div style="left:1992.3px;top:1785.5px;width:2.2px;height:10px;background:#c28a22;"></div>
<div class="t" style="left:1081.8px;top:1818.6px;font-size:28px;line-height:28px;color:#cbcbcb;letter-spacing:0.4px;">Texture Map</div>
<div style="left:1235.98px;top:1838.6px;width:181.8px;height:3.4px;background:radial-gradient(circle at 50% 50%,#a8a8a8 0,#a8a8a8 1.1px,rgba(168,168,168,0) 1.9px) 0 0/15.15px 3.4px repeat-x;"></div>
<div class="pill" style="left:1435.5px;top:1809.5px;width:45px;height:40.5px;"></div>
<svg style="left:1455px;top:1823.2px" width="9" height="14" viewBox="0 0 9 14"><path d="M0.3 0.3 L8.7 7 L0.3 13.7 Z" fill="#e4e4e4"/></svg>
<div class="pill" style="left:1488.5px;top:1809.5px;width:809px;height:40.5px;"></div>
<div class="pill" style="left:2305px;top:1809.5px;width:77px;height:40.5px;"></div>
<div class="t" style="left:2331px;top:1818.3px;font-size:28px;line-height:28px;color:#d4d4d4;">...</div>
</body></html>
